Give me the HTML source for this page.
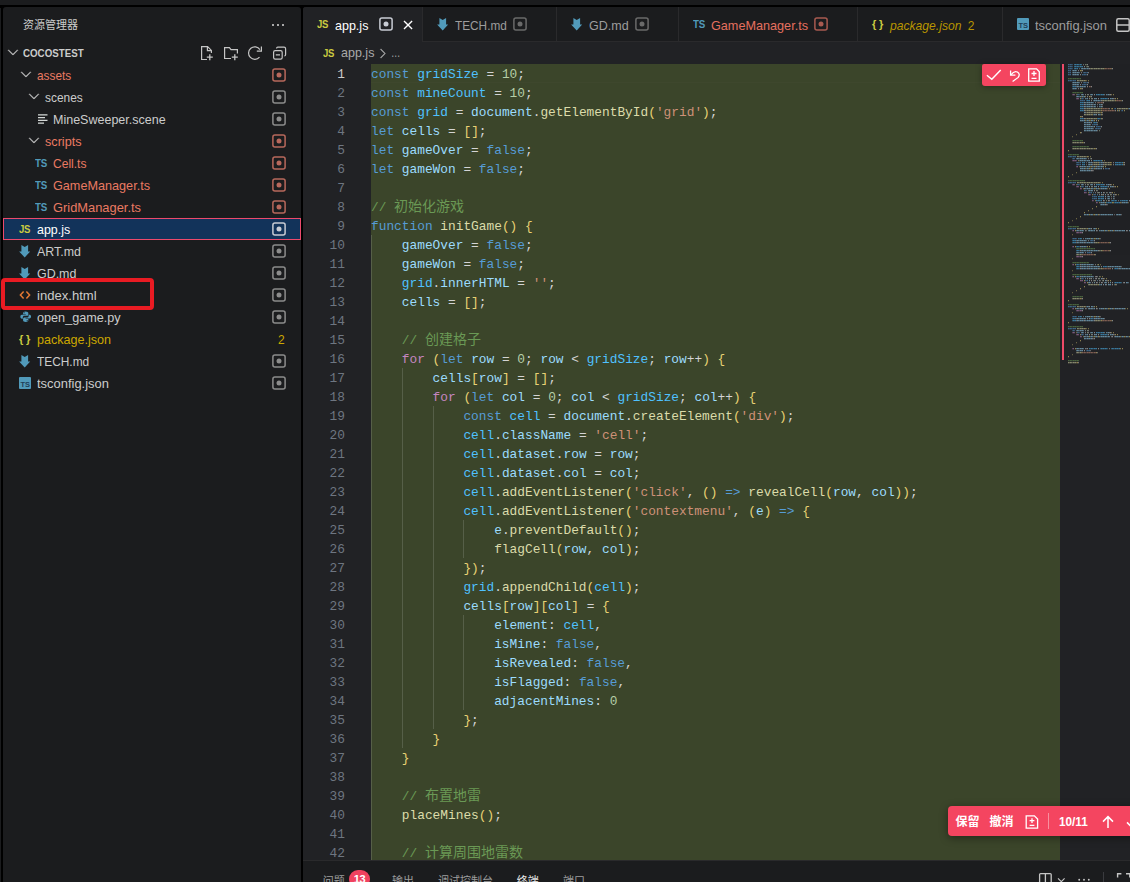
<!DOCTYPE html>
<html lang="zh-CN">
<head>
<meta charset="utf-8">
<title>app.js - COCOSTEST</title>
<style>
*{box-sizing:border-box;margin:0;padding:0}
html,body{width:1130px;height:882px;overflow:hidden;background:#000}
body{position:relative;font-family:"Liberation Sans","Noto Sans CJK SC",sans-serif;font-size:13px;color:#cccccc;-webkit-font-smoothing:antialiased}
.abs{position:absolute}
#topstrip{left:0;top:0;width:1130px;height:5px;background:#1b1c1e}
#leftstrip{left:0;top:8px;width:1px;height:874px;background:#1b1c1e}
#side{left:3px;top:7px;width:298px;height:875px;background:#1b1c1e;border-radius:3px 3px 0 0;overflow:hidden}
#main{left:303px;top:7px;width:840px;height:875px;background:#212225;border-radius:3px 0 0 0;overflow:hidden}
/* sidebar */
.shead{left:20px;top:1px;height:35px;line-height:35px;font-size:11px;color:#cccccc}
.row{position:absolute;left:0;width:298px;height:22px;line-height:22px;white-space:nowrap}
.row .lbl{position:absolute;top:1px;font-size:13px}
.row .ic{position:absolute;top:0;height:22px}
.sal{color:#ea7a62}
.yel{color:#cca700}
.st{position:absolute;left:269px;top:4px;width:14px;height:14px}
.sel{background:#12335a;outline:1px solid #ec4a6c;outline-offset:-1px;color:#fff}
.row .lbl.root{font-weight:bold;color:#cccccc;top:0}
.jsonic{font-weight:bold;font-size:11px;color:#cbcb41;letter-spacing:2.8px}
.sal2{color:#e5705f}.yel2{color:#b89500}
.tsic{font-weight:bold;font-size:11.5px;color:#519aba;letter-spacing:-0.3px;transform:scaleX(.85);transform-origin:0 50%}
.jsic{font-weight:bold;font-size:11.5px;color:#cbcb41;letter-spacing:-0.3px;transform:scaleX(.83);transform-origin:0 50%}
#redbox{left:0.5px;top:278.3px;width:153px;height:31.6px;border:4px solid #e91b23;border-radius:4px}
/* tabs */
#tabs{left:0;top:0;width:840px;height:35px;background:#1b1c1e;border-bottom:1px solid #2a2a2c}
.tab{position:absolute;top:0;height:34px;line-height:34px;border-right:1px solid #2a2a2c;color:#9d9d9d;white-space:nowrap}
.tab.act{background:#212225;color:#fff;height:35px}
.tab .lbl{position:absolute;top:2px}
.tab svg,.tab .ic{position:absolute}
#crumb{left:0;top:35px;width:840px;height:22px;line-height:22px;color:#a9a9a9}
/* editor */
#ed{left:0;top:57px;width:840px;height:797px;overflow:hidden}
#nums{position:absolute;left:0;top:1px;width:42px;text-align:right;color:#6e7681}
.ln{height:19px;line-height:19px}
.ln.cur{color:#cccccc}
#nums,#code{font-family:"Liberation Mono","Noto Sans CJK SC",monospace;font-size:12.83px}
#green{left:68px;top:0;width:689px;height:797px;background:#3b452a}
#code{position:absolute;left:68px;top:1px;white-space:pre;color:#d4d4d4}
.cl{height:19px;line-height:19px}
.cj{font-size:14px}
.kw{color:#569cd6}.ctrl{color:#c586c0}.const{color:#4fc1ff}.var{color:#9cdcfe}.fn{color:#dcdcaa}.str{color:#ce9178}.num{color:#b5cea8}.com{color:#6a9955}.pun{color:#d4d4d4}
.b0,.b1,.b2{color:#e8d274}
.g{position:absolute;width:1px;height:19px;background:rgba(255,255,255,0.14)}
#redbar{left:759px;top:57px;width:2px;height:296px;background:#ee4a68}
.mm{position:absolute;left:765px;top:57px;opacity:.55}
#curline{left:68px;top:0;width:689px;height:19px;border-bottom:1px solid rgba(255,255,255,.015)}
.pill{background:#f44560;color:#fff;border-radius:4px}
#pill1{left:679px;top:57px;width:64px;height:22px;border-radius:2px 2px 3px 3px;box-shadow:0 1px 6px rgba(0,0,0,.35)}
#pill2{left:645px;top:799px;width:220px;height:30px;box-shadow:0 2px 8px rgba(0,0,0,.4);font-size:12px;line-height:30px;font-weight:bold}
/* panel */
#panel{left:0;top:853px;width:840px;height:30px;background:#1b1c1e;border-top:1px solid #2a2a2c}
#panel .pt{position:absolute;top:8.5px;font-size:11px;line-height:22px;color:#9d9d9d}
</style>
</head>
<body>
<div id="topstrip" class="abs"></div>
<div id="leftstrip" class="abs"></div>

<div id="side" class="abs">
  <div class="abs shead">资源管理器</div>
  <svg class="abs" style="left:267px;top:10px" width="16" height="16" viewBox="0 0 16 16"><circle cx="3" cy="8" r="1.1" fill="#ccc"/><circle cx="8" cy="8" r="1.1" fill="#ccc"/><circle cx="13" cy="8" r="1.1" fill="#ccc"/></svg>
  <div id="tree"><div class="row " style="top:35px"><svg class="abs" style="left:2.4px;top:2.2px" width="16" height="16" viewBox="0 0 16 16"><path fill="#c5c5c5" stroke="#c5c5c5" stroke-width="0.3" d="M7.976 10.072l4.357-4.357.62.618L8.284 11h-.618L3 6.333l.619-.618 4.357 4.357z"/></svg><span class="lbl root" style="left:20px;font-size:11px;transform:scaleX(0.8853);transform-origin:0 50%;">COCOSTEST</span><svg class="abs" style="left:196px;top:2px" width="90" height="18" viewBox="0 0 90 18" fill="none" stroke="#c5c5c5" stroke-width="1.2"><path d="M8 15.5H2.6V2.6H8.6L12.4 6.4V9"/><path d="M8.4 2.8V6.6H12.2"/><path d="M10.8 10.2V16.2 M7.8 13.2H13.8" stroke-width="1.3"/><path d="M32 14.5H25.6V3.6H30.4L32 5.6H38.4V9.4"/><path d="M35.8 10.2V16.2 M32.8 13.2H38.8" stroke-width="1.3"/><path d="M60.9 5.6A6.2 6.2 0 1 0 60.5 13.1"/><path d="M62.4 2.6V7.2H57.8"/><rect x="74.6" y="6.6" width="8.6" height="8.6" rx="1.6"/><path d="M77.6 4.2V4.4Q77.6 3.2 78.8 3.2H85Q86.6 3.2 86.6 4.8V10.6Q86.6 12 85.4 12"/><path d="M76.8 10.9H81"/></svg></div><div class="row " style="top:57px"><svg class="abs" style="left:15px;top:2.2px" width="16" height="16" viewBox="0 0 16 16"><path fill="#c5c5c5" stroke="#c5c5c5" stroke-width="0.3" d="M7.976 10.072l4.357-4.357.62.618L8.284 11h-.618L3 6.333l.619-.618 4.357 4.357z"/></svg><span class="lbl sal" style="left:34.2px;font-size:13px;transform:scaleX(0.9101);transform-origin:0 50%;">assets</span><svg class="abs" style="left:269px;top:4px" width="14" height="14" viewBox="0 0 14 14"><rect x="0.9" y="0.9" width="12.2" height="12.2" rx="2" fill="none" stroke="#b8685c" stroke-width="1.5"/><circle cx="7" cy="7" r="2.5" fill="#b8685c"/></svg></div><div class="row " style="top:79px"><svg class="abs" style="left:23.2px;top:2.2px" width="16" height="16" viewBox="0 0 16 16"><path fill="#c5c5c5" stroke="#c5c5c5" stroke-width="0.3" d="M7.976 10.072l4.357-4.357.62.618L8.284 11h-.618L3 6.333l.619-.618 4.357 4.357z"/></svg><span class="lbl " style="left:42.2px;font-size:13px;transform:scaleX(0.9150);transform-origin:0 50%;">scenes</span><svg class="abs" style="left:269px;top:4px" width="14" height="14" viewBox="0 0 14 14"><rect x="0.9" y="0.9" width="12.2" height="12.2" rx="2" fill="none" stroke="#8c8c8c" stroke-width="1.5"/><circle cx="7" cy="7" r="2.5" fill="#8c8c8c"/></svg></div><div class="row " style="top:101px"><svg class="abs" style="left:34.2px;top:5px" width="12" height="12" viewBox="0 0 12 12"><path stroke="#d4d7d6" stroke-width="1.3" d="M1 1.8H10.5 M1 4.6H8 M1 7.4H10.5 M1 10.2H7"/></svg><span class="lbl " style="left:50.3px;font-size:13px;transform:scaleX(0.9618);transform-origin:0 50%;">MineSweeper.scene</span><svg class="abs" style="left:269px;top:4px" width="14" height="14" viewBox="0 0 14 14"><rect x="0.9" y="0.9" width="12.2" height="12.2" rx="2" fill="none" stroke="#8c8c8c" stroke-width="1.5"/><circle cx="7" cy="7" r="2.5" fill="#8c8c8c"/></svg></div><div class="row " style="top:123px"><svg class="abs" style="left:23.2px;top:2.2px" width="16" height="16" viewBox="0 0 16 16"><path fill="#c5c5c5" stroke="#c5c5c5" stroke-width="0.3" d="M7.976 10.072l4.357-4.357.62.618L8.284 11h-.618L3 6.333l.619-.618 4.357 4.357z"/></svg><span class="lbl sal" style="left:42.2px;font-size:13px;transform:scaleX(0.9717);transform-origin:0 50%;">scripts</span><svg class="abs" style="left:269px;top:4px" width="14" height="14" viewBox="0 0 14 14"><rect x="0.9" y="0.9" width="12.2" height="12.2" rx="2" fill="none" stroke="#b8685c" stroke-width="1.5"/><circle cx="7" cy="7" r="2.5" fill="#b8685c"/></svg></div><div class="row " style="top:145px"><span class="abs tsic" style="left:32px;top:0px">TS</span><span class="lbl sal" style="left:50.3px;font-size:13px;transform:scaleX(0.9273);transform-origin:0 50%;">Cell.ts</span><svg class="abs" style="left:269px;top:4px" width="14" height="14" viewBox="0 0 14 14"><rect x="0.9" y="0.9" width="12.2" height="12.2" rx="2" fill="none" stroke="#b8685c" stroke-width="1.5"/><circle cx="7" cy="7" r="2.5" fill="#b8685c"/></svg></div><div class="row " style="top:167px"><span class="abs tsic" style="left:32px;top:0px">TS</span><span class="lbl sal" style="left:50.3px;font-size:13px;transform:scaleX(0.9727);transform-origin:0 50%;">GameManager.ts</span><svg class="abs" style="left:269px;top:4px" width="14" height="14" viewBox="0 0 14 14"><rect x="0.9" y="0.9" width="12.2" height="12.2" rx="2" fill="none" stroke="#b8685c" stroke-width="1.5"/><circle cx="7" cy="7" r="2.5" fill="#b8685c"/></svg></div><div class="row " style="top:189px"><span class="abs tsic" style="left:32px;top:0px">TS</span><span class="lbl sal" style="left:50.3px;font-size:13px;transform:scaleX(0.9902);transform-origin:0 50%;">GridManager.ts</span><svg class="abs" style="left:269px;top:4px" width="14" height="14" viewBox="0 0 14 14"><rect x="0.9" y="0.9" width="12.2" height="12.2" rx="2" fill="none" stroke="#b8685c" stroke-width="1.5"/><circle cx="7" cy="7" r="2.5" fill="#b8685c"/></svg></div><div class="row sel" style="top:211px"><span class="abs jsic" style="left:16px;top:0px">JS</span><span class="lbl " style="left:34.2px;font-size:13px;transform:scaleX(0.9567);transform-origin:0 50%;">app.js</span><svg class="abs" style="left:269px;top:4px" width="14" height="14" viewBox="0 0 14 14"><rect x="0.9" y="0.9" width="12.2" height="12.2" rx="2" fill="none" stroke="#c8ccd4" stroke-width="1.5"/><circle cx="7" cy="7" r="2.5" fill="#c8ccd4"/></svg></div><div class="row " style="top:233px"><svg class="abs" style="left:16px;top:5px" width="12" height="13" viewBox="0 0 12 13"><path fill="#519aba" d="M2.4 0 L5.7 2 L9.1 0 L9.1 6.4 L11.2 6.4 L5.7 12.4 L0.1 6.4 L2.4 6.4 Z"/></svg><span class="lbl " style="left:34.2px;font-size:13px;transform:scaleX(0.9543);transform-origin:0 50%;">ART.md</span><svg class="abs" style="left:269px;top:4px" width="14" height="14" viewBox="0 0 14 14"><rect x="0.9" y="0.9" width="12.2" height="12.2" rx="2" fill="none" stroke="#8c8c8c" stroke-width="1.5"/><circle cx="7" cy="7" r="2.5" fill="#8c8c8c"/></svg></div><div class="row " style="top:255px"><svg class="abs" style="left:16px;top:5px" width="12" height="13" viewBox="0 0 12 13"><path fill="#519aba" d="M2.4 0 L5.7 2 L9.1 0 L9.1 6.4 L11.2 6.4 L5.7 12.4 L0.1 6.4 L2.4 6.4 Z"/></svg><span class="lbl " style="left:34.2px;font-size:13px;transform:scaleX(0.9570);transform-origin:0 50%;">GD.md</span><svg class="abs" style="left:269px;top:4px" width="14" height="14" viewBox="0 0 14 14"><rect x="0.9" y="0.9" width="12.2" height="12.2" rx="2" fill="none" stroke="#8c8c8c" stroke-width="1.5"/><circle cx="7" cy="7" r="2.5" fill="#8c8c8c"/></svg></div><div class="row " style="top:277px"><svg class="abs" style="left:16px;top:5px" width="12" height="12" viewBox="0 0 12 12"><path fill="none" stroke="#e37933" stroke-width="1.5" d="M4.6 2.6 L1.4 6 L4.6 9.4 M7.4 2.6 L10.6 6 L7.4 9.4"/></svg><span class="lbl " style="left:34.2px;font-size:13px;transform:scaleX(1.0059);transform-origin:0 50%;">index.html</span><svg class="abs" style="left:269px;top:4px" width="14" height="14" viewBox="0 0 14 14"><rect x="0.9" y="0.9" width="12.2" height="12.2" rx="2" fill="none" stroke="#8c8c8c" stroke-width="1.5"/><circle cx="7" cy="7" r="2.5" fill="#8c8c8c"/></svg></div><div class="row " style="top:299px"><svg class="abs" style="left:16.5px;top:5.2px" width="11.4" height="11.4" viewBox="0 0 13 13"><path fill="#519aba" d="M6.3 0.5c-2 0-2.8 0.8-2.8 2v1.3h3.1v0.6H2.2C1 4.4 0.4 5.4 0.4 6.6s0.6 2.2 1.8 2.2h1V7.4c0-1.1 0.9-1.9 2-1.9h2.7c0.9 0 1.6-0.7 1.6-1.6V2.5c0-1.2-1-2-3.2-2zM4.8 1.4a0.6 0.6 0 1 1 0 1.2 0.6 0.6 0 0 1 0-1.2z"/><path fill="#519aba" d="M6.7 12.5c2 0 2.8-0.8 2.8-2V9.2H6.4V8.6h4.4c1.2 0 1.8-1 1.8-2.2s-0.6-2.2-1.8-2.2h-1v1.4c0 1.1-0.9 1.9-2 1.9H5.1c-0.9 0-1.6 0.7-1.6 1.6v1.4c0 1.2 1 2 3.2 2zM8.2 11.6a0.6 0.6 0 1 1 0-1.2 0.6 0.6 0 0 1 0 1.2z"/></svg><span class="lbl " style="left:34.2px;font-size:13px;transform:scaleX(0.9731);transform-origin:0 50%;">open_game.py</span><svg class="abs" style="left:269px;top:4px" width="14" height="14" viewBox="0 0 14 14"><rect x="0.9" y="0.9" width="12.2" height="12.2" rx="2" fill="none" stroke="#8c8c8c" stroke-width="1.5"/><circle cx="7" cy="7" r="2.5" fill="#8c8c8c"/></svg></div><div class="row " style="top:321px"><span class="abs jsonic" style="left:16px;top:0px">{}</span><span class="lbl yel" style="left:34.2px;font-size:13px;transform:scaleX(0.9670);transform-origin:0 50%;">package.json</span><span class="lbl yel" style="left:275px;font-size:12px">2</span></div><div class="row " style="top:343px"><svg class="abs" style="left:16px;top:5px" width="12" height="13" viewBox="0 0 12 13"><path fill="#519aba" d="M2.4 0 L5.7 2 L9.1 0 L9.1 6.4 L11.2 6.4 L5.7 12.4 L0.1 6.4 L2.4 6.4 Z"/></svg><span class="lbl " style="left:34.2px;font-size:13px;transform:scaleX(0.9148);transform-origin:0 50%;">TECH.md</span><svg class="abs" style="left:269px;top:4px" width="14" height="14" viewBox="0 0 14 14"><rect x="0.9" y="0.9" width="12.2" height="12.2" rx="2" fill="none" stroke="#8c8c8c" stroke-width="1.5"/><circle cx="7" cy="7" r="2.5" fill="#8c8c8c"/></svg></div><div class="row " style="top:365px"><svg class="abs" style="left:16px;top:5px" width="12" height="12" viewBox="0 0 12 12"><rect x="0" y="0" width="12" height="12" rx="1" fill="#519aba"/><text x="6.2" y="10" font-family="Liberation Sans, sans-serif" font-size="7.5" font-weight="bold" fill="#1f3f58" text-anchor="middle">TS</text></svg><span class="lbl " style="left:34.2px;font-size:13px;transform:scaleX(0.9949);transform-origin:0 50%;">tsconfig.json</span><svg class="abs" style="left:269px;top:4px" width="14" height="14" viewBox="0 0 14 14"><rect x="0.9" y="0.9" width="12.2" height="12.2" rx="2" fill="none" stroke="#8c8c8c" stroke-width="1.5"/><circle cx="7" cy="7" r="2.5" fill="#8c8c8c"/></svg></div></div>
</div>
<div id="redbox" class="abs"></div>

<div id="main" class="abs">
  <div id="tabs" class="abs"><div class="tab act" style="left:0px;width:120px"><span class="abs jsic" style="left:14px;top:0px">JS</span><span class="lbl " style="left:31.8px;font-size:13px;transform:scaleX(0.9624);transform-origin:0 50%;">app.js</span><svg class="abs" style="left:76px;top:10px" width="14" height="14" viewBox="0 0 14 14"><rect x="0.9" y="0.9" width="12.2" height="12.2" rx="2" fill="none" stroke="#c8ccd4" stroke-width="1.5"/><circle cx="7" cy="7" r="2.5" fill="#c8ccd4"/></svg><svg class="abs" style="left:97px;top:10px" width="16" height="16" viewBox="0 0 16 16"><path stroke="#fff" stroke-width="1.4" d="M4 4.1L12.1 11.9M12.1 4.1L4 11.9"/></svg></div><div class="tab " style="left:120px;width:134px"><svg class="abs" style="left:14px;top:10.8px" width="12" height="13" viewBox="0 0 12 13"><path fill="#519aba" d="M2.4 0 L5.7 2 L9.1 0 L9.1 6.4 L11.2 6.4 L5.7 12.4 L0.1 6.4 L2.4 6.4 Z"/></svg><span class="lbl " style="left:32px;font-size:13px;transform:scaleX(0.9078);transform-origin:0 50%;">TECH.md</span><svg class="abs" style="left:90px;top:10px" width="14" height="14" viewBox="0 0 14 14"><rect x="0.9" y="0.9" width="12.2" height="12.2" rx="2" fill="none" stroke="#6a6a6a" stroke-width="1.5"/><circle cx="7" cy="7" r="2.5" fill="#6a6a6a"/></svg></div><div class="tab " style="left:254px;width:122px"><svg class="abs" style="left:14.3px;top:10.8px" width="12" height="13" viewBox="0 0 12 13"><path fill="#519aba" d="M2.4 0 L5.7 2 L9.1 0 L9.1 6.4 L11.2 6.4 L5.7 12.4 L0.1 6.4 L2.4 6.4 Z"/></svg><span class="lbl " style="left:32px;font-size:13px;transform:scaleX(0.9618);transform-origin:0 50%;">GD.md</span><svg class="abs" style="left:78.2px;top:10px" width="14" height="14" viewBox="0 0 14 14"><rect x="0.9" y="0.9" width="12.2" height="12.2" rx="2" fill="none" stroke="#6a6a6a" stroke-width="1.5"/><circle cx="7" cy="7" r="2.5" fill="#6a6a6a"/></svg></div><div class="tab " style="left:376px;width:179px"><span class="abs tsic" style="left:13.6px;top:0px">TS</span><span class="lbl sal2" style="left:32.3px;font-size:13px;transform:scaleX(0.9727);transform-origin:0 50%;">GameManager.ts</span><svg class="abs" style="left:135.4px;top:10px" width="14" height="14" viewBox="0 0 14 14"><rect x="0.9" y="0.9" width="12.2" height="12.2" rx="2" fill="none" stroke="#a85a50" stroke-width="1.5"/><circle cx="7" cy="7" r="2.5" fill="#a85a50"/></svg></div><div class="tab " style="left:555px;width:145px"><span class="abs jsonic" style="left:14px;top:0px">{}</span><span class="lbl yel2" style="left:32.4px;font-size:13px;font-style:italic;transform:scaleX(0.9331);transform-origin:0 50%;">package.json</span><span class="lbl yel2" style="left:109.8px;font-size:12px">2</span></div><div class="tab " style="left:700px;width:160px"><svg class="abs" style="left:14.2px;top:11px" width="12" height="12" viewBox="0 0 12 12"><rect x="0" y="0" width="12" height="12" rx="1" fill="#519aba"/><text x="6.2" y="10" font-family="Liberation Sans, sans-serif" font-size="7.5" font-weight="bold" fill="#1f3f58" text-anchor="middle">TS</text></svg><span class="lbl " style="left:32.4px;font-size:13px;transform:scaleX(0.9949);transform-origin:0 50%;">tsconfig.json</span></div><svg class="abs" style="left:812.8px;top:11px" width="14" height="14" viewBox="0 0 14 14"><rect x="0.8" y="0.8" width="12.4" height="12.4" rx="1.5" fill="#1b1c1e" stroke="#c5c5c5" stroke-width="1.5"/><path d="M0.8 7H13.2" stroke="#c5c5c5" stroke-width="1.5"/></svg></div>
  <div id="crumb" class="abs"><span class="abs jsic" style="left:20px;top:0px">JS</span><span class="lbl abs" style="left:37.9px;font-size:13px;top:0;position:absolute;transform:scaleX(0.9624);transform-origin:0 50%;">app.js</span><svg class="abs" style="left:71.5px;top:3.5px" width="15" height="15" viewBox="0 0 16 16"><path fill="#a9a9a9" stroke="#a9a9a9" stroke-width="0.4" d="M10.072 8.024L5.715 3.667l.618-.62L11 7.716v.618L6.333 13l-.618-.619 4.357-4.357z"/></svg><span class="abs" style="left:87.6px;top:0;transform:scaleX(.72);transform-origin:0 50%">…</span></div>
  <div id="ed" class="abs">
    <div id="green" class="abs"></div>
    <div id="curline" class="abs"></div>
    <div id="nums"><div class="ln cur">1</div><div class="ln">2</div><div class="ln">3</div><div class="ln">4</div><div class="ln">5</div><div class="ln">6</div><div class="ln">7</div><div class="ln">8</div><div class="ln">9</div><div class="ln">10</div><div class="ln">11</div><div class="ln">12</div><div class="ln">13</div><div class="ln">14</div><div class="ln">15</div><div class="ln">16</div><div class="ln">17</div><div class="ln">18</div><div class="ln">19</div><div class="ln">20</div><div class="ln">21</div><div class="ln">22</div><div class="ln">23</div><div class="ln">24</div><div class="ln">25</div><div class="ln">26</div><div class="ln">27</div><div class="ln">28</div><div class="ln">29</div><div class="ln">30</div><div class="ln">31</div><div class="ln">32</div><div class="ln">33</div><div class="ln">34</div><div class="ln">35</div><div class="ln">36</div><div class="ln">37</div><div class="ln">38</div><div class="ln">39</div><div class="ln">40</div><div class="ln">41</div><div class="ln">42</div></div>
    <div id="code"><i class="g" style="left:0.0px;top:170px"></i><i class="g" style="left:0.0px;top:189px"></i><i class="g" style="left:0.0px;top:208px"></i><i class="g" style="left:0.0px;top:227px"></i><i class="g" style="left:0.0px;top:246px"></i><i class="g" style="left:0.0px;top:265px"></i><i class="g" style="left:0.0px;top:284px"></i><i class="g" style="left:0.0px;top:303px"></i><i class="g" style="left:30.8px;top:303px"></i><i class="g" style="left:0.0px;top:322px"></i><i class="g" style="left:30.8px;top:322px"></i><i class="g" style="left:0.0px;top:341px"></i><i class="g" style="left:30.8px;top:341px"></i><i class="g" style="left:61.6px;top:341px"></i><i class="g" style="left:0.0px;top:360px"></i><i class="g" style="left:30.8px;top:360px"></i><i class="g" style="left:61.6px;top:360px"></i><i class="g" style="left:0.0px;top:379px"></i><i class="g" style="left:30.8px;top:379px"></i><i class="g" style="left:61.6px;top:379px"></i><i class="g" style="left:0.0px;top:398px"></i><i class="g" style="left:30.8px;top:398px"></i><i class="g" style="left:61.6px;top:398px"></i><i class="g" style="left:0.0px;top:417px"></i><i class="g" style="left:30.8px;top:417px"></i><i class="g" style="left:61.6px;top:417px"></i><i class="g" style="left:0.0px;top:436px"></i><i class="g" style="left:30.8px;top:436px"></i><i class="g" style="left:61.6px;top:436px"></i><i class="g" style="left:0.0px;top:455px"></i><i class="g" style="left:30.8px;top:455px"></i><i class="g" style="left:61.6px;top:455px"></i><i class="g" style="left:92.4px;top:455px"></i><i class="g" style="left:0.0px;top:474px"></i><i class="g" style="left:30.8px;top:474px"></i><i class="g" style="left:61.6px;top:474px"></i><i class="g" style="left:92.4px;top:474px"></i><i class="g" style="left:0.0px;top:493px"></i><i class="g" style="left:30.8px;top:493px"></i><i class="g" style="left:61.6px;top:493px"></i><i class="g" style="left:0.0px;top:512px"></i><i class="g" style="left:30.8px;top:512px"></i><i class="g" style="left:61.6px;top:512px"></i><i class="g" style="left:0.0px;top:531px"></i><i class="g" style="left:30.8px;top:531px"></i><i class="g" style="left:61.6px;top:531px"></i><i class="g" style="left:0.0px;top:550px"></i><i class="g" style="left:30.8px;top:550px"></i><i class="g" style="left:61.6px;top:550px"></i><i class="g" style="left:92.4px;top:550px"></i><i class="g" style="left:0.0px;top:569px"></i><i class="g" style="left:30.8px;top:569px"></i><i class="g" style="left:61.6px;top:569px"></i><i class="g" style="left:92.4px;top:569px"></i><i class="g" style="left:0.0px;top:588px"></i><i class="g" style="left:30.8px;top:588px"></i><i class="g" style="left:61.6px;top:588px"></i><i class="g" style="left:92.4px;top:588px"></i><i class="g" style="left:0.0px;top:607px"></i><i class="g" style="left:30.8px;top:607px"></i><i class="g" style="left:61.6px;top:607px"></i><i class="g" style="left:92.4px;top:607px"></i><i class="g" style="left:0.0px;top:626px"></i><i class="g" style="left:30.8px;top:626px"></i><i class="g" style="left:61.6px;top:626px"></i><i class="g" style="left:92.4px;top:626px"></i><i class="g" style="left:0.0px;top:645px"></i><i class="g" style="left:30.8px;top:645px"></i><i class="g" style="left:61.6px;top:645px"></i><i class="g" style="left:0.0px;top:664px"></i><i class="g" style="left:30.8px;top:664px"></i><i class="g" style="left:0.0px;top:683px"></i><i class="g" style="left:0.0px;top:702px"></i><i class="g" style="left:0.0px;top:721px"></i><i class="g" style="left:0.0px;top:740px"></i><i class="g" style="left:0.0px;top:759px"></i><i class="g" style="left:0.0px;top:778px"></i><div class="cl"><span class="kw">const</span> <span class="const">gridSize</span> <span class="pun">=</span> <span class="num">10</span><span class="pun">;</span></div><div class="cl"><span class="kw">const</span> <span class="const">mineCount</span> <span class="pun">=</span> <span class="num">10</span><span class="pun">;</span></div><div class="cl"><span class="kw">const</span> <span class="const">grid</span> <span class="pun">=</span> <span class="var">document</span><span class="pun">.</span><span class="fn">getElementById</span><span class="b0">(</span><span class="str">&#x27;grid&#x27;</span><span class="b0">)</span><span class="pun">;</span></div><div class="cl"><span class="kw">let</span> <span class="var">cells</span> <span class="pun">=</span> <span class="b0">[</span><span class="b0">]</span><span class="pun">;</span></div><div class="cl"><span class="kw">let</span> <span class="var">gameOver</span> <span class="pun">=</span> <span class="kw">false</span><span class="pun">;</span></div><div class="cl"><span class="kw">let</span> <span class="var">gameWon</span> <span class="pun">=</span> <span class="kw">false</span><span class="pun">;</span></div><div class="cl"></div><div class="cl"><span class="com">// <span class="cj">初始化游戏</span></span></div><div class="cl"><span class="kw">function</span> <span class="fn">initGame</span><span class="b0">(</span><span class="b0">)</span> <span class="b0">{</span></div><div class="cl">    <span class="var">gameOver</span> <span class="pun">=</span> <span class="kw">false</span><span class="pun">;</span></div><div class="cl">    <span class="var">gameWon</span> <span class="pun">=</span> <span class="kw">false</span><span class="pun">;</span></div><div class="cl">    <span class="const">grid</span><span class="pun">.</span><span class="var">innerHTML</span> <span class="pun">=</span> <span class="str">&#x27;&#x27;</span><span class="pun">;</span></div><div class="cl">    <span class="var">cells</span> <span class="pun">=</span> <span class="b1">[</span><span class="b1">]</span><span class="pun">;</span></div><div class="cl"></div><div class="cl">    <span class="com">// <span class="cj">创建格子</span></span></div><div class="cl">    <span class="ctrl">for</span> <span class="b1">(</span><span class="kw">let</span> <span class="var">row</span> <span class="pun">=</span> <span class="num">0</span><span class="pun">;</span> <span class="var">row</span> <span class="pun">&lt;</span> <span class="const">gridSize</span><span class="pun">;</span> <span class="var">row</span><span class="pun">+</span><span class="pun">+</span><span class="b1">)</span> <span class="b1">{</span></div><div class="cl">        <span class="var">cells</span><span class="b2">[</span><span class="var">row</span><span class="b2">]</span> <span class="pun">=</span> <span class="b2">[</span><span class="b2">]</span><span class="pun">;</span></div><div class="cl">        <span class="ctrl">for</span> <span class="b2">(</span><span class="kw">let</span> <span class="var">col</span> <span class="pun">=</span> <span class="num">0</span><span class="pun">;</span> <span class="var">col</span> <span class="pun">&lt;</span> <span class="const">gridSize</span><span class="pun">;</span> <span class="var">col</span><span class="pun">+</span><span class="pun">+</span><span class="b2">)</span> <span class="b2">{</span></div><div class="cl">            <span class="kw">const</span> <span class="const">cell</span> <span class="pun">=</span> <span class="var">document</span><span class="pun">.</span><span class="fn">createElement</span><span class="b0">(</span><span class="str">&#x27;div&#x27;</span><span class="b0">)</span><span class="pun">;</span></div><div class="cl">            <span class="const">cell</span><span class="pun">.</span><span class="var">className</span> <span class="pun">=</span> <span class="str">&#x27;cell&#x27;</span><span class="pun">;</span></div><div class="cl">            <span class="const">cell</span><span class="pun">.</span><span class="var">dataset</span><span class="pun">.</span><span class="var">row</span> <span class="pun">=</span> <span class="var">row</span><span class="pun">;</span></div><div class="cl">            <span class="const">cell</span><span class="pun">.</span><span class="var">dataset</span><span class="pun">.</span><span class="var">col</span> <span class="pun">=</span> <span class="var">col</span><span class="pun">;</span></div><div class="cl">            <span class="const">cell</span><span class="pun">.</span><span class="fn">addEventListener</span><span class="b0">(</span><span class="str">&#x27;click&#x27;</span><span class="pun">,</span> <span class="b1">(</span><span class="b1">)</span> <span class="kw">=&gt;</span> <span class="fn">revealCell</span><span class="b1">(</span><span class="var">row</span><span class="pun">,</span> <span class="var">col</span><span class="b1">)</span><span class="b0">)</span><span class="pun">;</span></div><div class="cl">            <span class="const">cell</span><span class="pun">.</span><span class="fn">addEventListener</span><span class="b0">(</span><span class="str">&#x27;contextmenu&#x27;</span><span class="pun">,</span> <span class="b1">(</span><span class="var">e</span><span class="b1">)</span> <span class="kw">=&gt;</span> <span class="b1">{</span></div><div class="cl">                <span class="var">e</span><span class="pun">.</span><span class="fn">preventDefault</span><span class="b2">(</span><span class="b2">)</span><span class="pun">;</span></div><div class="cl">                <span class="fn">flagCell</span><span class="b2">(</span><span class="var">row</span><span class="pun">,</span> <span class="var">col</span><span class="b2">)</span><span class="pun">;</span></div><div class="cl">            <span class="b1">}</span><span class="b0">)</span><span class="pun">;</span></div><div class="cl">            <span class="const">grid</span><span class="pun">.</span><span class="fn">appendChild</span><span class="b0">(</span><span class="const">cell</span><span class="b0">)</span><span class="pun">;</span></div><div class="cl">            <span class="var">cells</span><span class="b0">[</span><span class="var">row</span><span class="b0">]</span><span class="b0">[</span><span class="var">col</span><span class="b0">]</span> <span class="pun">=</span> <span class="b0">{</span></div><div class="cl">                <span class="var">element</span><span class="pun">:</span> <span class="const">cell</span><span class="pun">,</span></div><div class="cl">                <span class="var">isMine</span><span class="pun">:</span> <span class="kw">false</span><span class="pun">,</span></div><div class="cl">                <span class="var">isRevealed</span><span class="pun">:</span> <span class="kw">false</span><span class="pun">,</span></div><div class="cl">                <span class="var">isFlagged</span><span class="pun">:</span> <span class="kw">false</span><span class="pun">,</span></div><div class="cl">                <span class="var">adjacentMines</span><span class="pun">:</span> <span class="num">0</span></div><div class="cl">            <span class="b0">}</span><span class="pun">;</span></div><div class="cl">        <span class="b2">}</span></div><div class="cl">    <span class="b1">}</span></div><div class="cl"></div><div class="cl">    <span class="com">// <span class="cj">布置地雷</span></span></div><div class="cl">    <span class="fn">placeMines</span><span class="b1">(</span><span class="b1">)</span><span class="pun">;</span></div><div class="cl"></div><div class="cl">    <span class="com">// <span class="cj">计算周围地雷数</span></span></div></div>
  </div>
  <div id="redbar" class="abs"></div>
  <svg class="mm" width="68" height="302" viewBox="0 0 68 302"><defs><pattern id="dz" width="7" height="2" patternUnits="userSpaceOnUse"><rect x="1" width="1" height="2" fill="#212225" opacity=".3"/><rect x="3" width="1" height="2" fill="#212225" opacity=".15"/><rect x="4" width="1" height="2" fill="#212225" opacity=".4"/><rect x="6" width="1" height="2" fill="#212225" opacity=".2"/></pattern></defs><rect x="0" y="0" width="5" height="1.3" fill="#569cd6"/><rect x="6" y="0" width="8" height="1.3" fill="#4fc1ff"/><rect x="15" y="0" width="1" height="1.3" fill="#d4d4d4"/><rect x="17" y="0" width="2" height="1.3" fill="#b5cea8"/><rect x="19" y="0" width="1" height="1.3" fill="#d4d4d4"/><rect x="0" y="2" width="5" height="1.3" fill="#569cd6"/><rect x="6" y="2" width="9" height="1.3" fill="#4fc1ff"/><rect x="16" y="2" width="1" height="1.3" fill="#d4d4d4"/><rect x="18" y="2" width="2" height="1.3" fill="#b5cea8"/><rect x="20" y="2" width="1" height="1.3" fill="#d4d4d4"/><rect x="0" y="4" width="5" height="1.3" fill="#569cd6"/><rect x="6" y="4" width="4" height="1.3" fill="#4fc1ff"/><rect x="11" y="4" width="1" height="1.3" fill="#d4d4d4"/><rect x="13" y="4" width="8" height="1.3" fill="#9cdcfe"/><rect x="21" y="4" width="1" height="1.3" fill="#d4d4d4"/><rect x="22" y="4" width="14" height="1.3" fill="#dcdcaa"/><rect x="36" y="4" width="1" height="1.3" fill="#e8d274"/><rect x="37" y="4" width="6" height="1.3" fill="#ce9178"/><rect x="43" y="4" width="1" height="1.3" fill="#e8d274"/><rect x="44" y="4" width="1" height="1.3" fill="#d4d4d4"/><rect x="0" y="6" width="3" height="1.3" fill="#569cd6"/><rect x="4" y="6" width="5" height="1.3" fill="#9cdcfe"/><rect x="10" y="6" width="1" height="1.3" fill="#d4d4d4"/><rect x="12" y="6" width="1" height="1.3" fill="#e8d274"/><rect x="13" y="6" width="1" height="1.3" fill="#e8d274"/><rect x="14" y="6" width="1" height="1.3" fill="#d4d4d4"/><rect x="0" y="8" width="3" height="1.3" fill="#569cd6"/><rect x="4" y="8" width="8" height="1.3" fill="#9cdcfe"/><rect x="13" y="8" width="1" height="1.3" fill="#d4d4d4"/><rect x="15" y="8" width="5" height="1.3" fill="#569cd6"/><rect x="20" y="8" width="1" height="1.3" fill="#d4d4d4"/><rect x="0" y="10" width="3" height="1.3" fill="#569cd6"/><rect x="4" y="10" width="7" height="1.3" fill="#9cdcfe"/><rect x="12" y="10" width="1" height="1.3" fill="#d4d4d4"/><rect x="14" y="10" width="5" height="1.3" fill="#569cd6"/><rect x="19" y="10" width="1" height="1.3" fill="#d4d4d4"/><rect x="0" y="14" width="13" height="1.3" fill="#6a9955"/><rect x="0" y="16" width="8" height="1.3" fill="#569cd6"/><rect x="9" y="16" width="8" height="1.3" fill="#dcdcaa"/><rect x="17" y="16" width="1" height="1.3" fill="#e8d274"/><rect x="18" y="16" width="1" height="1.3" fill="#e8d274"/><rect x="20" y="16" width="1" height="1.3" fill="#e8d274"/><rect x="4" y="18" width="8" height="1.3" fill="#9cdcfe"/><rect x="13" y="18" width="1" height="1.3" fill="#d4d4d4"/><rect x="15" y="18" width="5" height="1.3" fill="#569cd6"/><rect x="20" y="18" width="1" height="1.3" fill="#d4d4d4"/><rect x="4" y="20" width="7" height="1.3" fill="#9cdcfe"/><rect x="12" y="20" width="1" height="1.3" fill="#d4d4d4"/><rect x="14" y="20" width="5" height="1.3" fill="#569cd6"/><rect x="19" y="20" width="1" height="1.3" fill="#d4d4d4"/><rect x="4" y="22" width="4" height="1.3" fill="#4fc1ff"/><rect x="8" y="22" width="1" height="1.3" fill="#d4d4d4"/><rect x="9" y="22" width="9" height="1.3" fill="#9cdcfe"/><rect x="19" y="22" width="1" height="1.3" fill="#d4d4d4"/><rect x="21" y="22" width="2" height="1.3" fill="#ce9178"/><rect x="23" y="22" width="1" height="1.3" fill="#d4d4d4"/><rect x="4" y="24" width="5" height="1.3" fill="#9cdcfe"/><rect x="10" y="24" width="1" height="1.3" fill="#d4d4d4"/><rect x="12" y="24" width="1" height="1.3" fill="#e8d274"/><rect x="13" y="24" width="1" height="1.3" fill="#e8d274"/><rect x="14" y="24" width="1" height="1.3" fill="#d4d4d4"/><rect x="4" y="28" width="11" height="1.3" fill="#6a9955"/><rect x="4" y="30" width="3" height="1.3" fill="#c586c0"/><rect x="8" y="30" width="1" height="1.3" fill="#e8d274"/><rect x="9" y="30" width="3" height="1.3" fill="#569cd6"/><rect x="13" y="30" width="3" height="1.3" fill="#9cdcfe"/><rect x="17" y="30" width="1" height="1.3" fill="#d4d4d4"/><rect x="19" y="30" width="1" height="1.3" fill="#b5cea8"/><rect x="20" y="30" width="1" height="1.3" fill="#d4d4d4"/><rect x="22" y="30" width="3" height="1.3" fill="#9cdcfe"/><rect x="26" y="30" width="1" height="1.3" fill="#d4d4d4"/><rect x="28" y="30" width="8" height="1.3" fill="#4fc1ff"/><rect x="36" y="30" width="1" height="1.3" fill="#d4d4d4"/><rect x="38" y="30" width="3" height="1.3" fill="#9cdcfe"/><rect x="41" y="30" width="1" height="1.3" fill="#d4d4d4"/><rect x="42" y="30" width="1" height="1.3" fill="#d4d4d4"/><rect x="43" y="30" width="1" height="1.3" fill="#e8d274"/><rect x="45" y="30" width="1" height="1.3" fill="#e8d274"/><rect x="8" y="32" width="5" height="1.3" fill="#9cdcfe"/><rect x="13" y="32" width="1" height="1.3" fill="#e8d274"/><rect x="14" y="32" width="3" height="1.3" fill="#9cdcfe"/><rect x="17" y="32" width="1" height="1.3" fill="#e8d274"/><rect x="19" y="32" width="1" height="1.3" fill="#d4d4d4"/><rect x="21" y="32" width="1" height="1.3" fill="#e8d274"/><rect x="22" y="32" width="1" height="1.3" fill="#e8d274"/><rect x="23" y="32" width="1" height="1.3" fill="#d4d4d4"/><rect x="8" y="34" width="3" height="1.3" fill="#c586c0"/><rect x="12" y="34" width="1" height="1.3" fill="#e8d274"/><rect x="13" y="34" width="3" height="1.3" fill="#569cd6"/><rect x="17" y="34" width="3" height="1.3" fill="#9cdcfe"/><rect x="21" y="34" width="1" height="1.3" fill="#d4d4d4"/><rect x="23" y="34" width="1" height="1.3" fill="#b5cea8"/><rect x="24" y="34" width="1" height="1.3" fill="#d4d4d4"/><rect x="26" y="34" width="3" height="1.3" fill="#9cdcfe"/><rect x="30" y="34" width="1" height="1.3" fill="#d4d4d4"/><rect x="32" y="34" width="8" height="1.3" fill="#4fc1ff"/><rect x="40" y="34" width="1" height="1.3" fill="#d4d4d4"/><rect x="42" y="34" width="3" height="1.3" fill="#9cdcfe"/><rect x="45" y="34" width="1" height="1.3" fill="#d4d4d4"/><rect x="46" y="34" width="1" height="1.3" fill="#d4d4d4"/><rect x="47" y="34" width="1" height="1.3" fill="#e8d274"/><rect x="49" y="34" width="1" height="1.3" fill="#e8d274"/><rect x="12" y="36" width="5" height="1.3" fill="#569cd6"/><rect x="18" y="36" width="4" height="1.3" fill="#4fc1ff"/><rect x="23" y="36" width="1" height="1.3" fill="#d4d4d4"/><rect x="25" y="36" width="8" height="1.3" fill="#9cdcfe"/><rect x="33" y="36" width="1" height="1.3" fill="#d4d4d4"/><rect x="34" y="36" width="13" height="1.3" fill="#dcdcaa"/><rect x="47" y="36" width="1" height="1.3" fill="#e8d274"/><rect x="48" y="36" width="5" height="1.3" fill="#ce9178"/><rect x="53" y="36" width="1" height="1.3" fill="#e8d274"/><rect x="54" y="36" width="1" height="1.3" fill="#d4d4d4"/><rect x="12" y="38" width="4" height="1.3" fill="#4fc1ff"/><rect x="16" y="38" width="1" height="1.3" fill="#d4d4d4"/><rect x="17" y="38" width="9" height="1.3" fill="#9cdcfe"/><rect x="27" y="38" width="1" height="1.3" fill="#d4d4d4"/><rect x="29" y="38" width="6" height="1.3" fill="#ce9178"/><rect x="35" y="38" width="1" height="1.3" fill="#d4d4d4"/><rect x="12" y="40" width="4" height="1.3" fill="#4fc1ff"/><rect x="16" y="40" width="1" height="1.3" fill="#d4d4d4"/><rect x="17" y="40" width="7" height="1.3" fill="#9cdcfe"/><rect x="24" y="40" width="1" height="1.3" fill="#d4d4d4"/><rect x="25" y="40" width="3" height="1.3" fill="#9cdcfe"/><rect x="29" y="40" width="1" height="1.3" fill="#d4d4d4"/><rect x="31" y="40" width="3" height="1.3" fill="#9cdcfe"/><rect x="34" y="40" width="1" height="1.3" fill="#d4d4d4"/><rect x="12" y="42" width="4" height="1.3" fill="#4fc1ff"/><rect x="16" y="42" width="1" height="1.3" fill="#d4d4d4"/><rect x="17" y="42" width="7" height="1.3" fill="#9cdcfe"/><rect x="24" y="42" width="1" height="1.3" fill="#d4d4d4"/><rect x="25" y="42" width="3" height="1.3" fill="#9cdcfe"/><rect x="29" y="42" width="1" height="1.3" fill="#d4d4d4"/><rect x="31" y="42" width="3" height="1.3" fill="#9cdcfe"/><rect x="34" y="42" width="1" height="1.3" fill="#d4d4d4"/><rect x="12" y="44" width="4" height="1.3" fill="#4fc1ff"/><rect x="16" y="44" width="1" height="1.3" fill="#d4d4d4"/><rect x="17" y="44" width="16" height="1.3" fill="#dcdcaa"/><rect x="33" y="44" width="1" height="1.3" fill="#e8d274"/><rect x="34" y="44" width="7" height="1.3" fill="#ce9178"/><rect x="41" y="44" width="1" height="1.3" fill="#d4d4d4"/><rect x="43" y="44" width="1" height="1.3" fill="#e8d274"/><rect x="44" y="44" width="1" height="1.3" fill="#e8d274"/><rect x="46" y="44" width="2" height="1.3" fill="#569cd6"/><rect x="49" y="44" width="10" height="1.3" fill="#dcdcaa"/><rect x="59" y="44" width="1" height="1.3" fill="#e8d274"/><rect x="60" y="44" width="3" height="1.3" fill="#9cdcfe"/><rect x="63" y="44" width="1" height="1.3" fill="#d4d4d4"/><rect x="65" y="44" width="3" height="1.3" fill="#9cdcfe"/><rect x="68" y="44" width="1" height="1.3" fill="#e8d274"/><rect x="69" y="44" width="1" height="1.3" fill="#e8d274"/><rect x="70" y="44" width="1" height="1.3" fill="#d4d4d4"/><rect x="12" y="46" width="4" height="1.3" fill="#4fc1ff"/><rect x="16" y="46" width="1" height="1.3" fill="#d4d4d4"/><rect x="17" y="46" width="16" height="1.3" fill="#dcdcaa"/><rect x="33" y="46" width="1" height="1.3" fill="#e8d274"/><rect x="34" y="46" width="13" height="1.3" fill="#ce9178"/><rect x="47" y="46" width="1" height="1.3" fill="#d4d4d4"/><rect x="49" y="46" width="1" height="1.3" fill="#e8d274"/><rect x="50" y="46" width="1" height="1.3" fill="#9cdcfe"/><rect x="51" y="46" width="1" height="1.3" fill="#e8d274"/><rect x="53" y="46" width="2" height="1.3" fill="#569cd6"/><rect x="56" y="46" width="1" height="1.3" fill="#e8d274"/><rect x="16" y="48" width="1" height="1.3" fill="#9cdcfe"/><rect x="17" y="48" width="1" height="1.3" fill="#d4d4d4"/><rect x="18" y="48" width="14" height="1.3" fill="#dcdcaa"/><rect x="32" y="48" width="1" height="1.3" fill="#e8d274"/><rect x="33" y="48" width="1" height="1.3" fill="#e8d274"/><rect x="34" y="48" width="1" height="1.3" fill="#d4d4d4"/><rect x="16" y="50" width="8" height="1.3" fill="#dcdcaa"/><rect x="24" y="50" width="1" height="1.3" fill="#e8d274"/><rect x="25" y="50" width="3" height="1.3" fill="#9cdcfe"/><rect x="28" y="50" width="1" height="1.3" fill="#d4d4d4"/><rect x="30" y="50" width="3" height="1.3" fill="#9cdcfe"/><rect x="33" y="50" width="1" height="1.3" fill="#e8d274"/><rect x="34" y="50" width="1" height="1.3" fill="#d4d4d4"/><rect x="12" y="52" width="1" height="1.3" fill="#e8d274"/><rect x="13" y="52" width="1" height="1.3" fill="#e8d274"/><rect x="14" y="52" width="1" height="1.3" fill="#d4d4d4"/><rect x="12" y="54" width="4" height="1.3" fill="#4fc1ff"/><rect x="16" y="54" width="1" height="1.3" fill="#d4d4d4"/><rect x="17" y="54" width="11" height="1.3" fill="#dcdcaa"/><rect x="28" y="54" width="1" height="1.3" fill="#e8d274"/><rect x="29" y="54" width="4" height="1.3" fill="#4fc1ff"/><rect x="33" y="54" width="1" height="1.3" fill="#e8d274"/><rect x="34" y="54" width="1" height="1.3" fill="#d4d4d4"/><rect x="12" y="56" width="5" height="1.3" fill="#9cdcfe"/><rect x="17" y="56" width="1" height="1.3" fill="#e8d274"/><rect x="18" y="56" width="3" height="1.3" fill="#9cdcfe"/><rect x="21" y="56" width="1" height="1.3" fill="#e8d274"/><rect x="22" y="56" width="1" height="1.3" fill="#e8d274"/><rect x="23" y="56" width="3" height="1.3" fill="#9cdcfe"/><rect x="26" y="56" width="1" height="1.3" fill="#e8d274"/><rect x="28" y="56" width="1" height="1.3" fill="#d4d4d4"/><rect x="30" y="56" width="1" height="1.3" fill="#e8d274"/><rect x="16" y="58" width="7" height="1.3" fill="#9cdcfe"/><rect x="23" y="58" width="1" height="1.3" fill="#d4d4d4"/><rect x="25" y="58" width="4" height="1.3" fill="#4fc1ff"/><rect x="29" y="58" width="1" height="1.3" fill="#d4d4d4"/><rect x="16" y="60" width="6" height="1.3" fill="#9cdcfe"/><rect x="22" y="60" width="1" height="1.3" fill="#d4d4d4"/><rect x="24" y="60" width="5" height="1.3" fill="#569cd6"/><rect x="29" y="60" width="1" height="1.3" fill="#d4d4d4"/><rect x="16" y="62" width="10" height="1.3" fill="#9cdcfe"/><rect x="26" y="62" width="1" height="1.3" fill="#d4d4d4"/><rect x="28" y="62" width="5" height="1.3" fill="#569cd6"/><rect x="33" y="62" width="1" height="1.3" fill="#d4d4d4"/><rect x="16" y="64" width="9" height="1.3" fill="#9cdcfe"/><rect x="25" y="64" width="1" height="1.3" fill="#d4d4d4"/><rect x="27" y="64" width="5" height="1.3" fill="#569cd6"/><rect x="32" y="64" width="1" height="1.3" fill="#d4d4d4"/><rect x="16" y="66" width="13" height="1.3" fill="#9cdcfe"/><rect x="29" y="66" width="1" height="1.3" fill="#d4d4d4"/><rect x="31" y="66" width="1" height="1.3" fill="#b5cea8"/><rect x="12" y="68" width="1" height="1.3" fill="#e8d274"/><rect x="13" y="68" width="1" height="1.3" fill="#d4d4d4"/><rect x="8" y="70" width="1" height="1.3" fill="#e8d274"/><rect x="4" y="72" width="1" height="1.3" fill="#e8d274"/><rect x="4" y="76" width="11" height="1.3" fill="#6a9955"/><rect x="4" y="78" width="10" height="1.3" fill="#dcdcaa"/><rect x="14" y="78" width="1" height="1.3" fill="#e8d274"/><rect x="15" y="78" width="1" height="1.3" fill="#e8d274"/><rect x="16" y="78" width="1" height="1.3" fill="#d4d4d4"/><rect x="4" y="82" width="17" height="1.3" fill="#6a9955"/><rect x="4" y="84" width="22" height="1.3" fill="#dcdcaa"/><rect x="26" y="84" width="1" height="1.3" fill="#e8d274"/><rect x="27" y="84" width="1" height="1.3" fill="#e8d274"/><rect x="28" y="84" width="1" height="1.3" fill="#d4d4d4"/><rect x="0" y="86" width="1" height="1.3" fill="#e8d274"/><rect x="0" y="90" width="11" height="1.3" fill="#6a9955"/><rect x="0" y="92" width="8" height="1.3" fill="#569cd6"/><rect x="9" y="92" width="10" height="1.3" fill="#dcdcaa"/><rect x="19" y="92" width="1" height="1.3" fill="#e8d274"/><rect x="20" y="92" width="1" height="1.3" fill="#e8d274"/><rect x="22" y="92" width="1" height="1.3" fill="#e8d274"/><rect x="4" y="94" width="3" height="1.3" fill="#569cd6"/><rect x="8" y="94" width="11" height="1.3" fill="#9cdcfe"/><rect x="20" y="94" width="1" height="1.3" fill="#d4d4d4"/><rect x="22" y="94" width="1" height="1.3" fill="#b5cea8"/><rect x="23" y="94" width="1" height="1.3" fill="#d4d4d4"/><rect x="4" y="96" width="5" height="1.3" fill="#c586c0"/><rect x="10" y="96" width="1" height="1.3" fill="#e8d274"/><rect x="11" y="96" width="11" height="1.3" fill="#9cdcfe"/><rect x="23" y="96" width="1" height="1.3" fill="#d4d4d4"/><rect x="25" y="96" width="9" height="1.3" fill="#4fc1ff"/><rect x="34" y="96" width="1" height="1.3" fill="#e8d274"/><rect x="36" y="96" width="1" height="1.3" fill="#e8d274"/><rect x="8" y="98" width="5" height="1.3" fill="#569cd6"/><rect x="14" y="98" width="3" height="1.3" fill="#4fc1ff"/><rect x="18" y="98" width="1" height="1.3" fill="#d4d4d4"/><rect x="20" y="98" width="4" height="1.3" fill="#9cdcfe"/><rect x="24" y="98" width="1" height="1.3" fill="#d4d4d4"/><rect x="25" y="98" width="5" height="1.3" fill="#dcdcaa"/><rect x="30" y="98" width="1" height="1.3" fill="#e8d274"/><rect x="31" y="98" width="4" height="1.3" fill="#9cdcfe"/><rect x="35" y="98" width="1" height="1.3" fill="#d4d4d4"/><rect x="36" y="98" width="6" height="1.3" fill="#dcdcaa"/><rect x="42" y="98" width="1" height="1.3" fill="#e8d274"/><rect x="43" y="98" width="1" height="1.3" fill="#e8d274"/><rect x="45" y="98" width="1" height="1.3" fill="#d4d4d4"/><rect x="47" y="98" width="8" height="1.3" fill="#4fc1ff"/><rect x="55" y="98" width="1" height="1.3" fill="#e8d274"/><rect x="56" y="98" width="1" height="1.3" fill="#d4d4d4"/><rect x="8" y="100" width="5" height="1.3" fill="#569cd6"/><rect x="14" y="100" width="3" height="1.3" fill="#4fc1ff"/><rect x="18" y="100" width="1" height="1.3" fill="#d4d4d4"/><rect x="20" y="100" width="4" height="1.3" fill="#9cdcfe"/><rect x="24" y="100" width="1" height="1.3" fill="#d4d4d4"/><rect x="25" y="100" width="5" height="1.3" fill="#dcdcaa"/><rect x="30" y="100" width="1" height="1.3" fill="#e8d274"/><rect x="31" y="100" width="4" height="1.3" fill="#9cdcfe"/><rect x="35" y="100" width="1" height="1.3" fill="#d4d4d4"/><rect x="36" y="100" width="6" height="1.3" fill="#dcdcaa"/><rect x="42" y="100" width="1" height="1.3" fill="#e8d274"/><rect x="43" y="100" width="1" height="1.3" fill="#e8d274"/><rect x="45" y="100" width="1" height="1.3" fill="#d4d4d4"/><rect x="47" y="100" width="8" height="1.3" fill="#4fc1ff"/><rect x="55" y="100" width="1" height="1.3" fill="#e8d274"/><rect x="56" y="100" width="1" height="1.3" fill="#d4d4d4"/><rect x="8" y="102" width="2" height="1.3" fill="#c586c0"/><rect x="11" y="102" width="1" height="1.3" fill="#e8d274"/><rect x="12" y="102" width="1" height="1.3" fill="#d4d4d4"/><rect x="13" y="102" width="5" height="1.3" fill="#9cdcfe"/><rect x="18" y="102" width="1" height="1.3" fill="#e8d274"/><rect x="19" y="102" width="3" height="1.3" fill="#9cdcfe"/><rect x="22" y="102" width="1" height="1.3" fill="#e8d274"/><rect x="23" y="102" width="1" height="1.3" fill="#e8d274"/><rect x="24" y="102" width="3" height="1.3" fill="#9cdcfe"/><rect x="27" y="102" width="1" height="1.3" fill="#e8d274"/><rect x="28" y="102" width="1" height="1.3" fill="#d4d4d4"/><rect x="29" y="102" width="6" height="1.3" fill="#9cdcfe"/><rect x="35" y="102" width="1" height="1.3" fill="#e8d274"/><rect x="37" y="102" width="1" height="1.3" fill="#e8d274"/><rect x="12" y="104" width="5" height="1.3" fill="#9cdcfe"/><rect x="17" y="104" width="1" height="1.3" fill="#e8d274"/><rect x="18" y="104" width="3" height="1.3" fill="#9cdcfe"/><rect x="21" y="104" width="1" height="1.3" fill="#e8d274"/><rect x="22" y="104" width="1" height="1.3" fill="#e8d274"/><rect x="23" y="104" width="3" height="1.3" fill="#9cdcfe"/><rect x="26" y="104" width="1" height="1.3" fill="#e8d274"/><rect x="27" y="104" width="1" height="1.3" fill="#d4d4d4"/><rect x="28" y="104" width="6" height="1.3" fill="#9cdcfe"/><rect x="35" y="104" width="1" height="1.3" fill="#d4d4d4"/><rect x="37" y="104" width="4" height="1.3" fill="#569cd6"/><rect x="41" y="104" width="1" height="1.3" fill="#d4d4d4"/><rect x="12" y="106" width="11" height="1.3" fill="#9cdcfe"/><rect x="23" y="106" width="1" height="1.3" fill="#d4d4d4"/><rect x="24" y="106" width="1" height="1.3" fill="#d4d4d4"/><rect x="25" y="106" width="1" height="1.3" fill="#d4d4d4"/><rect x="8" y="108" width="1" height="1.3" fill="#e8d274"/><rect x="4" y="110" width="1" height="1.3" fill="#e8d274"/><rect x="0" y="112" width="1" height="1.3" fill="#e8d274"/><rect x="0" y="116" width="17" height="1.3" fill="#6a9955"/><rect x="0" y="118" width="8" height="1.3" fill="#569cd6"/><rect x="9" y="118" width="22" height="1.3" fill="#dcdcaa"/><rect x="31" y="118" width="1" height="1.3" fill="#e8d274"/><rect x="32" y="118" width="1" height="1.3" fill="#e8d274"/><rect x="34" y="118" width="1" height="1.3" fill="#e8d274"/><rect x="4" y="120" width="3" height="1.3" fill="#c586c0"/><rect x="8" y="120" width="1" height="1.3" fill="#e8d274"/><rect x="9" y="120" width="3" height="1.3" fill="#569cd6"/><rect x="13" y="120" width="3" height="1.3" fill="#9cdcfe"/><rect x="17" y="120" width="1" height="1.3" fill="#d4d4d4"/><rect x="19" y="120" width="1" height="1.3" fill="#b5cea8"/><rect x="20" y="120" width="1" height="1.3" fill="#d4d4d4"/><rect x="22" y="120" width="3" height="1.3" fill="#9cdcfe"/><rect x="26" y="120" width="1" height="1.3" fill="#d4d4d4"/><rect x="28" y="120" width="8" height="1.3" fill="#4fc1ff"/><rect x="36" y="120" width="1" height="1.3" fill="#d4d4d4"/><rect x="38" y="120" width="3" height="1.3" fill="#9cdcfe"/><rect x="41" y="120" width="1" height="1.3" fill="#d4d4d4"/><rect x="42" y="120" width="1" height="1.3" fill="#d4d4d4"/><rect x="43" y="120" width="1" height="1.3" fill="#e8d274"/><rect x="45" y="120" width="1" height="1.3" fill="#e8d274"/><rect x="8" y="122" width="3" height="1.3" fill="#c586c0"/><rect x="12" y="122" width="1" height="1.3" fill="#e8d274"/><rect x="13" y="122" width="3" height="1.3" fill="#569cd6"/><rect x="17" y="122" width="3" height="1.3" fill="#9cdcfe"/><rect x="21" y="122" width="1" height="1.3" fill="#d4d4d4"/><rect x="23" y="122" width="1" height="1.3" fill="#b5cea8"/><rect x="24" y="122" width="1" height="1.3" fill="#d4d4d4"/><rect x="26" y="122" width="3" height="1.3" fill="#9cdcfe"/><rect x="30" y="122" width="1" height="1.3" fill="#d4d4d4"/><rect x="32" y="122" width="8" height="1.3" fill="#4fc1ff"/><rect x="40" y="122" width="1" height="1.3" fill="#d4d4d4"/><rect x="42" y="122" width="3" height="1.3" fill="#9cdcfe"/><rect x="45" y="122" width="1" height="1.3" fill="#d4d4d4"/><rect x="46" y="122" width="1" height="1.3" fill="#d4d4d4"/><rect x="47" y="122" width="1" height="1.3" fill="#e8d274"/><rect x="49" y="122" width="1" height="1.3" fill="#e8d274"/><rect x="12" y="124" width="2" height="1.3" fill="#c586c0"/><rect x="15" y="124" width="1" height="1.3" fill="#e8d274"/><rect x="16" y="124" width="1" height="1.3" fill="#d4d4d4"/><rect x="17" y="124" width="5" height="1.3" fill="#9cdcfe"/><rect x="22" y="124" width="1" height="1.3" fill="#e8d274"/><rect x="23" y="124" width="3" height="1.3" fill="#9cdcfe"/><rect x="26" y="124" width="1" height="1.3" fill="#e8d274"/><rect x="27" y="124" width="1" height="1.3" fill="#e8d274"/><rect x="28" y="124" width="3" height="1.3" fill="#9cdcfe"/><rect x="31" y="124" width="1" height="1.3" fill="#e8d274"/><rect x="32" y="124" width="1" height="1.3" fill="#d4d4d4"/><rect x="33" y="124" width="6" height="1.3" fill="#9cdcfe"/><rect x="39" y="124" width="1" height="1.3" fill="#e8d274"/><rect x="41" y="124" width="1" height="1.3" fill="#e8d274"/><rect x="16" y="126" width="3" height="1.3" fill="#569cd6"/><rect x="20" y="126" width="5" height="1.3" fill="#9cdcfe"/><rect x="26" y="126" width="1" height="1.3" fill="#d4d4d4"/><rect x="28" y="126" width="1" height="1.3" fill="#b5cea8"/><rect x="29" y="126" width="1" height="1.3" fill="#d4d4d4"/><rect x="16" y="128" width="3" height="1.3" fill="#c586c0"/><rect x="20" y="128" width="1" height="1.3" fill="#e8d274"/><rect x="21" y="128" width="3" height="1.3" fill="#569cd6"/><rect x="25" y="128" width="1" height="1.3" fill="#9cdcfe"/><rect x="27" y="128" width="1" height="1.3" fill="#d4d4d4"/><rect x="29" y="128" width="1" height="1.3" fill="#d4d4d4"/><rect x="30" y="128" width="1" height="1.3" fill="#b5cea8"/><rect x="31" y="128" width="1" height="1.3" fill="#d4d4d4"/><rect x="33" y="128" width="1" height="1.3" fill="#9cdcfe"/><rect x="35" y="128" width="1" height="1.3" fill="#d4d4d4"/><rect x="36" y="128" width="1" height="1.3" fill="#d4d4d4"/><rect x="38" y="128" width="1" height="1.3" fill="#b5cea8"/><rect x="39" y="128" width="1" height="1.3" fill="#d4d4d4"/><rect x="41" y="128" width="1" height="1.3" fill="#9cdcfe"/><rect x="42" y="128" width="1" height="1.3" fill="#d4d4d4"/><rect x="43" y="128" width="1" height="1.3" fill="#d4d4d4"/><rect x="44" y="128" width="1" height="1.3" fill="#e8d274"/><rect x="46" y="128" width="1" height="1.3" fill="#e8d274"/><rect x="20" y="130" width="3" height="1.3" fill="#c586c0"/><rect x="24" y="130" width="1" height="1.3" fill="#e8d274"/><rect x="25" y="130" width="3" height="1.3" fill="#569cd6"/><rect x="29" y="130" width="1" height="1.3" fill="#9cdcfe"/><rect x="31" y="130" width="1" height="1.3" fill="#d4d4d4"/><rect x="33" y="130" width="1" height="1.3" fill="#d4d4d4"/><rect x="34" y="130" width="1" height="1.3" fill="#b5cea8"/><rect x="35" y="130" width="1" height="1.3" fill="#d4d4d4"/><rect x="37" y="130" width="1" height="1.3" fill="#9cdcfe"/><rect x="39" y="130" width="1" height="1.3" fill="#d4d4d4"/><rect x="40" y="130" width="1" height="1.3" fill="#d4d4d4"/><rect x="42" y="130" width="1" height="1.3" fill="#b5cea8"/><rect x="43" y="130" width="1" height="1.3" fill="#d4d4d4"/><rect x="45" y="130" width="1" height="1.3" fill="#9cdcfe"/><rect x="46" y="130" width="1" height="1.3" fill="#d4d4d4"/><rect x="47" y="130" width="1" height="1.3" fill="#d4d4d4"/><rect x="48" y="130" width="1" height="1.3" fill="#e8d274"/><rect x="50" y="130" width="1" height="1.3" fill="#e8d274"/><rect x="24" y="132" width="5" height="1.3" fill="#569cd6"/><rect x="30" y="132" width="6" height="1.3" fill="#4fc1ff"/><rect x="37" y="132" width="1" height="1.3" fill="#d4d4d4"/><rect x="39" y="132" width="3" height="1.3" fill="#9cdcfe"/><rect x="43" y="132" width="1" height="1.3" fill="#d4d4d4"/><rect x="45" y="132" width="1" height="1.3" fill="#9cdcfe"/><rect x="46" y="132" width="1" height="1.3" fill="#d4d4d4"/><rect x="24" y="134" width="5" height="1.3" fill="#569cd6"/><rect x="30" y="134" width="6" height="1.3" fill="#4fc1ff"/><rect x="37" y="134" width="1" height="1.3" fill="#d4d4d4"/><rect x="39" y="134" width="3" height="1.3" fill="#9cdcfe"/><rect x="43" y="134" width="1" height="1.3" fill="#d4d4d4"/><rect x="45" y="134" width="1" height="1.3" fill="#9cdcfe"/><rect x="46" y="134" width="1" height="1.3" fill="#d4d4d4"/><rect x="24" y="136" width="2" height="1.3" fill="#c586c0"/><rect x="27" y="136" width="1" height="1.3" fill="#e8d274"/><rect x="28" y="136" width="6" height="1.3" fill="#4fc1ff"/><rect x="35" y="136" width="1" height="1.3" fill="#d4d4d4"/><rect x="36" y="136" width="1" height="1.3" fill="#d4d4d4"/><rect x="38" y="136" width="1" height="1.3" fill="#b5cea8"/><rect x="40" y="136" width="1" height="1.3" fill="#d4d4d4"/><rect x="41" y="136" width="1" height="1.3" fill="#d4d4d4"/><rect x="43" y="136" width="6" height="1.3" fill="#4fc1ff"/><rect x="50" y="136" width="1" height="1.3" fill="#d4d4d4"/><rect x="52" y="136" width="8" height="1.3" fill="#4fc1ff"/><rect x="61" y="136" width="1" height="1.3" fill="#d4d4d4"/><rect x="62" y="136" width="1" height="1.3" fill="#d4d4d4"/><rect x="64" y="136" width="6" height="1.3" fill="#4fc1ff"/><rect x="71" y="136" width="1" height="1.3" fill="#d4d4d4"/><rect x="72" y="136" width="1" height="1.3" fill="#d4d4d4"/><rect x="74" y="136" width="1" height="1.3" fill="#b5cea8"/><rect x="76" y="136" width="1" height="1.3" fill="#d4d4d4"/><rect x="77" y="136" width="1" height="1.3" fill="#d4d4d4"/><rect x="79" y="136" width="6" height="1.3" fill="#4fc1ff"/><rect x="86" y="136" width="1" height="1.3" fill="#d4d4d4"/><rect x="88" y="136" width="8" height="1.3" fill="#4fc1ff"/><rect x="96" y="136" width="1" height="1.3" fill="#e8d274"/><rect x="98" y="136" width="1" height="1.3" fill="#e8d274"/><rect x="28" y="138" width="2" height="1.3" fill="#c586c0"/><rect x="31" y="138" width="1" height="1.3" fill="#e8d274"/><rect x="32" y="138" width="5" height="1.3" fill="#9cdcfe"/><rect x="37" y="138" width="1" height="1.3" fill="#e8d274"/><rect x="38" y="138" width="6" height="1.3" fill="#4fc1ff"/><rect x="44" y="138" width="1" height="1.3" fill="#e8d274"/><rect x="45" y="138" width="1" height="1.3" fill="#e8d274"/><rect x="46" y="138" width="6" height="1.3" fill="#4fc1ff"/><rect x="52" y="138" width="1" height="1.3" fill="#e8d274"/><rect x="53" y="138" width="1" height="1.3" fill="#d4d4d4"/><rect x="54" y="138" width="6" height="1.3" fill="#9cdcfe"/><rect x="60" y="138" width="1" height="1.3" fill="#e8d274"/><rect x="62" y="138" width="1" height="1.3" fill="#e8d274"/><rect x="32" y="140" width="5" height="1.3" fill="#9cdcfe"/><rect x="37" y="140" width="1" height="1.3" fill="#d4d4d4"/><rect x="38" y="140" width="1" height="1.3" fill="#d4d4d4"/><rect x="39" y="140" width="1" height="1.3" fill="#d4d4d4"/><rect x="28" y="142" width="1" height="1.3" fill="#e8d274"/><rect x="24" y="144" width="1" height="1.3" fill="#e8d274"/><rect x="20" y="146" width="1" height="1.3" fill="#e8d274"/><rect x="16" y="148" width="1" height="1.3" fill="#e8d274"/><rect x="16" y="150" width="5" height="1.3" fill="#9cdcfe"/><rect x="21" y="150" width="1" height="1.3" fill="#e8d274"/><rect x="22" y="150" width="3" height="1.3" fill="#9cdcfe"/><rect x="25" y="150" width="1" height="1.3" fill="#e8d274"/><rect x="26" y="150" width="1" height="1.3" fill="#e8d274"/><rect x="27" y="150" width="3" height="1.3" fill="#9cdcfe"/><rect x="30" y="150" width="1" height="1.3" fill="#e8d274"/><rect x="31" y="150" width="1" height="1.3" fill="#d4d4d4"/><rect x="32" y="150" width="13" height="1.3" fill="#9cdcfe"/><rect x="46" y="150" width="1" height="1.3" fill="#d4d4d4"/><rect x="48" y="150" width="5" height="1.3" fill="#9cdcfe"/><rect x="53" y="150" width="1" height="1.3" fill="#d4d4d4"/><rect x="12" y="152" width="1" height="1.3" fill="#e8d274"/><rect x="8" y="154" width="1" height="1.3" fill="#e8d274"/><rect x="4" y="156" width="1" height="1.3" fill="#e8d274"/><rect x="0" y="158" width="1" height="1.3" fill="#e8d274"/><rect x="0" y="162" width="11" height="1.3" fill="#6a9955"/><rect x="0" y="164" width="8" height="1.3" fill="#569cd6"/><rect x="9" y="164" width="10" height="1.3" fill="#dcdcaa"/><rect x="19" y="164" width="1" height="1.3" fill="#e8d274"/><rect x="20" y="164" width="3" height="1.3" fill="#9cdcfe"/><rect x="23" y="164" width="1" height="1.3" fill="#d4d4d4"/><rect x="25" y="164" width="3" height="1.3" fill="#9cdcfe"/><rect x="28" y="164" width="1" height="1.3" fill="#e8d274"/><rect x="30" y="164" width="1" height="1.3" fill="#e8d274"/><rect x="4" y="166" width="2" height="1.3" fill="#c586c0"/><rect x="7" y="166" width="1" height="1.3" fill="#e8d274"/><rect x="8" y="166" width="8" height="1.3" fill="#9cdcfe"/><rect x="17" y="166" width="1" height="1.3" fill="#d4d4d4"/><rect x="18" y="166" width="1" height="1.3" fill="#d4d4d4"/><rect x="20" y="166" width="7" height="1.3" fill="#9cdcfe"/><rect x="28" y="166" width="1" height="1.3" fill="#d4d4d4"/><rect x="29" y="166" width="1" height="1.3" fill="#d4d4d4"/><rect x="31" y="166" width="5" height="1.3" fill="#9cdcfe"/><rect x="36" y="166" width="1" height="1.3" fill="#e8d274"/><rect x="37" y="166" width="3" height="1.3" fill="#9cdcfe"/><rect x="40" y="166" width="1" height="1.3" fill="#e8d274"/><rect x="41" y="166" width="1" height="1.3" fill="#e8d274"/><rect x="42" y="166" width="3" height="1.3" fill="#9cdcfe"/><rect x="45" y="166" width="1" height="1.3" fill="#e8d274"/><rect x="46" y="166" width="1" height="1.3" fill="#d4d4d4"/><rect x="47" y="166" width="10" height="1.3" fill="#9cdcfe"/><rect x="58" y="166" width="1" height="1.3" fill="#d4d4d4"/><rect x="59" y="166" width="1" height="1.3" fill="#d4d4d4"/><rect x="61" y="166" width="5" height="1.3" fill="#9cdcfe"/><rect x="66" y="166" width="1" height="1.3" fill="#e8d274"/><rect x="67" y="166" width="3" height="1.3" fill="#9cdcfe"/><rect x="70" y="166" width="1" height="1.3" fill="#e8d274"/><rect x="71" y="166" width="1" height="1.3" fill="#e8d274"/><rect x="72" y="166" width="3" height="1.3" fill="#9cdcfe"/><rect x="75" y="166" width="1" height="1.3" fill="#e8d274"/><rect x="76" y="166" width="1" height="1.3" fill="#d4d4d4"/><rect x="77" y="166" width="9" height="1.3" fill="#9cdcfe"/><rect x="86" y="166" width="1" height="1.3" fill="#e8d274"/><rect x="88" y="166" width="1" height="1.3" fill="#e8d274"/><rect x="8" y="168" width="6" height="1.3" fill="#c586c0"/><rect x="14" y="168" width="1" height="1.3" fill="#d4d4d4"/><rect x="4" y="170" width="1" height="1.3" fill="#e8d274"/><rect x="4" y="174" width="5" height="1.3" fill="#569cd6"/><rect x="10" y="174" width="4" height="1.3" fill="#4fc1ff"/><rect x="15" y="174" width="1" height="1.3" fill="#d4d4d4"/><rect x="17" y="174" width="5" height="1.3" fill="#9cdcfe"/><rect x="22" y="174" width="1" height="1.3" fill="#e8d274"/><rect x="23" y="174" width="3" height="1.3" fill="#9cdcfe"/><rect x="26" y="174" width="1" height="1.3" fill="#e8d274"/><rect x="27" y="174" width="1" height="1.3" fill="#e8d274"/><rect x="28" y="174" width="3" height="1.3" fill="#9cdcfe"/><rect x="31" y="174" width="1" height="1.3" fill="#e8d274"/><rect x="32" y="174" width="1" height="1.3" fill="#d4d4d4"/><rect x="4" y="176" width="4" height="1.3" fill="#4fc1ff"/><rect x="8" y="176" width="1" height="1.3" fill="#d4d4d4"/><rect x="9" y="176" width="10" height="1.3" fill="#9cdcfe"/><rect x="20" y="176" width="1" height="1.3" fill="#d4d4d4"/><rect x="22" y="176" width="4" height="1.3" fill="#569cd6"/><rect x="26" y="176" width="1" height="1.3" fill="#d4d4d4"/><rect x="4" y="178" width="4" height="1.3" fill="#4fc1ff"/><rect x="8" y="178" width="1" height="1.3" fill="#d4d4d4"/><rect x="9" y="178" width="7" height="1.3" fill="#9cdcfe"/><rect x="16" y="178" width="1" height="1.3" fill="#d4d4d4"/><rect x="17" y="178" width="9" height="1.3" fill="#9cdcfe"/><rect x="26" y="178" width="1" height="1.3" fill="#d4d4d4"/><rect x="27" y="178" width="3" height="1.3" fill="#dcdcaa"/><rect x="30" y="178" width="1" height="1.3" fill="#e8d274"/><rect x="31" y="178" width="10" height="1.3" fill="#ce9178"/><rect x="41" y="178" width="1" height="1.3" fill="#e8d274"/><rect x="42" y="178" width="1" height="1.3" fill="#d4d4d4"/><rect x="4" y="182" width="2" height="1.3" fill="#c586c0"/><rect x="7" y="182" width="1" height="1.3" fill="#e8d274"/><rect x="8" y="182" width="4" height="1.3" fill="#4fc1ff"/><rect x="12" y="182" width="1" height="1.3" fill="#d4d4d4"/><rect x="13" y="182" width="6" height="1.3" fill="#9cdcfe"/><rect x="19" y="182" width="1" height="1.3" fill="#e8d274"/><rect x="21" y="182" width="1" height="1.3" fill="#e8d274"/><rect x="8" y="184" width="19" height="1.3" fill="#6a9955"/><rect x="8" y="186" width="4" height="1.3" fill="#4fc1ff"/><rect x="12" y="186" width="1" height="1.3" fill="#d4d4d4"/><rect x="13" y="186" width="7" height="1.3" fill="#9cdcfe"/><rect x="20" y="186" width="1" height="1.3" fill="#d4d4d4"/><rect x="21" y="186" width="9" height="1.3" fill="#9cdcfe"/><rect x="30" y="186" width="1" height="1.3" fill="#d4d4d4"/><rect x="31" y="186" width="3" height="1.3" fill="#dcdcaa"/><rect x="34" y="186" width="1" height="1.3" fill="#e8d274"/><rect x="35" y="186" width="6" height="1.3" fill="#ce9178"/><rect x="41" y="186" width="1" height="1.3" fill="#e8d274"/><rect x="42" y="186" width="1" height="1.3" fill="#d4d4d4"/><rect x="8" y="188" width="8" height="1.3" fill="#9cdcfe"/><rect x="17" y="188" width="1" height="1.3" fill="#d4d4d4"/><rect x="19" y="188" width="4" height="1.3" fill="#569cd6"/><rect x="23" y="188" width="1" height="1.3" fill="#d4d4d4"/><rect x="8" y="190" width="5" height="1.3" fill="#dcdcaa"/><rect x="13" y="190" width="1" height="1.3" fill="#e8d274"/><rect x="14" y="190" width="12" height="1.3" fill="#ce9178"/><rect x="26" y="190" width="1" height="1.3" fill="#e8d274"/><rect x="27" y="190" width="1" height="1.3" fill="#d4d4d4"/><rect x="8" y="192" width="6" height="1.3" fill="#c586c0"/><rect x="14" y="192" width="1" height="1.3" fill="#d4d4d4"/><rect x="4" y="194" width="1" height="1.3" fill="#e8d274"/><rect x="4" y="198" width="17" height="1.3" fill="#6a9955"/><rect x="4" y="200" width="2" height="1.3" fill="#c586c0"/><rect x="7" y="200" width="1" height="1.3" fill="#e8d274"/><rect x="8" y="200" width="4" height="1.3" fill="#4fc1ff"/><rect x="12" y="200" width="1" height="1.3" fill="#d4d4d4"/><rect x="13" y="200" width="13" height="1.3" fill="#9cdcfe"/><rect x="27" y="200" width="1" height="1.3" fill="#d4d4d4"/><rect x="29" y="200" width="1" height="1.3" fill="#b5cea8"/><rect x="30" y="200" width="1" height="1.3" fill="#e8d274"/><rect x="32" y="200" width="1" height="1.3" fill="#e8d274"/><rect x="8" y="202" width="4" height="1.3" fill="#4fc1ff"/><rect x="12" y="202" width="1" height="1.3" fill="#d4d4d4"/><rect x="13" y="202" width="7" height="1.3" fill="#9cdcfe"/><rect x="20" y="202" width="1" height="1.3" fill="#d4d4d4"/><rect x="21" y="202" width="11" height="1.3" fill="#9cdcfe"/><rect x="33" y="202" width="1" height="1.3" fill="#d4d4d4"/><rect x="35" y="202" width="4" height="1.3" fill="#4fc1ff"/><rect x="39" y="202" width="1" height="1.3" fill="#d4d4d4"/><rect x="40" y="202" width="13" height="1.3" fill="#9cdcfe"/><rect x="53" y="202" width="1" height="1.3" fill="#d4d4d4"/><rect x="8" y="204" width="4" height="1.3" fill="#4fc1ff"/><rect x="12" y="204" width="1" height="1.3" fill="#d4d4d4"/><rect x="13" y="204" width="7" height="1.3" fill="#9cdcfe"/><rect x="20" y="204" width="1" height="1.3" fill="#d4d4d4"/><rect x="21" y="204" width="9" height="1.3" fill="#9cdcfe"/><rect x="30" y="204" width="1" height="1.3" fill="#d4d4d4"/><rect x="31" y="204" width="3" height="1.3" fill="#dcdcaa"/><rect x="34" y="204" width="1" height="1.3" fill="#e8d274"/><rect x="35" y="204" width="8" height="1.3" fill="#ce9178"/><rect x="44" y="204" width="1" height="1.3" fill="#d4d4d4"/><rect x="46" y="204" width="4" height="1.3" fill="#4fc1ff"/><rect x="50" y="204" width="1" height="1.3" fill="#d4d4d4"/><rect x="51" y="204" width="13" height="1.3" fill="#9cdcfe"/><rect x="64" y="204" width="1" height="1.3" fill="#e8d274"/><rect x="65" y="204" width="1" height="1.3" fill="#d4d4d4"/><rect x="4" y="206" width="1" height="1.3" fill="#e8d274"/><rect x="4" y="210" width="20" height="1.3" fill="#6a9955"/><rect x="4" y="212" width="2" height="1.3" fill="#c586c0"/><rect x="7" y="212" width="1" height="1.3" fill="#e8d274"/><rect x="8" y="212" width="4" height="1.3" fill="#4fc1ff"/><rect x="12" y="212" width="1" height="1.3" fill="#d4d4d4"/><rect x="13" y="212" width="13" height="1.3" fill="#9cdcfe"/><rect x="27" y="212" width="1" height="1.3" fill="#d4d4d4"/><rect x="28" y="212" width="1" height="1.3" fill="#d4d4d4"/><rect x="29" y="212" width="1" height="1.3" fill="#d4d4d4"/><rect x="31" y="212" width="1" height="1.3" fill="#b5cea8"/><rect x="32" y="212" width="1" height="1.3" fill="#e8d274"/><rect x="34" y="212" width="1" height="1.3" fill="#e8d274"/><rect x="8" y="214" width="3" height="1.3" fill="#c586c0"/><rect x="12" y="214" width="1" height="1.3" fill="#e8d274"/><rect x="13" y="214" width="3" height="1.3" fill="#569cd6"/><rect x="17" y="214" width="1" height="1.3" fill="#9cdcfe"/><rect x="19" y="214" width="1" height="1.3" fill="#d4d4d4"/><rect x="21" y="214" width="1" height="1.3" fill="#d4d4d4"/><rect x="22" y="214" width="1" height="1.3" fill="#b5cea8"/><rect x="23" y="214" width="1" height="1.3" fill="#d4d4d4"/><rect x="25" y="214" width="1" height="1.3" fill="#9cdcfe"/><rect x="27" y="214" width="1" height="1.3" fill="#d4d4d4"/><rect x="28" y="214" width="1" height="1.3" fill="#d4d4d4"/><rect x="30" y="214" width="1" height="1.3" fill="#b5cea8"/><rect x="31" y="214" width="1" height="1.3" fill="#d4d4d4"/><rect x="33" y="214" width="1" height="1.3" fill="#9cdcfe"/><rect x="34" y="214" width="1" height="1.3" fill="#d4d4d4"/><rect x="35" y="214" width="1" height="1.3" fill="#d4d4d4"/><rect x="36" y="214" width="1" height="1.3" fill="#e8d274"/><rect x="38" y="214" width="1" height="1.3" fill="#e8d274"/><rect x="12" y="216" width="3" height="1.3" fill="#c586c0"/><rect x="16" y="216" width="1" height="1.3" fill="#e8d274"/><rect x="17" y="216" width="3" height="1.3" fill="#569cd6"/><rect x="21" y="216" width="1" height="1.3" fill="#9cdcfe"/><rect x="23" y="216" width="1" height="1.3" fill="#d4d4d4"/><rect x="25" y="216" width="1" height="1.3" fill="#d4d4d4"/><rect x="26" y="216" width="1" height="1.3" fill="#b5cea8"/><rect x="27" y="216" width="1" height="1.3" fill="#d4d4d4"/><rect x="29" y="216" width="1" height="1.3" fill="#9cdcfe"/><rect x="31" y="216" width="1" height="1.3" fill="#d4d4d4"/><rect x="32" y="216" width="1" height="1.3" fill="#d4d4d4"/><rect x="34" y="216" width="1" height="1.3" fill="#b5cea8"/><rect x="35" y="216" width="1" height="1.3" fill="#d4d4d4"/><rect x="37" y="216" width="1" height="1.3" fill="#9cdcfe"/><rect x="38" y="216" width="1" height="1.3" fill="#d4d4d4"/><rect x="39" y="216" width="1" height="1.3" fill="#d4d4d4"/><rect x="40" y="216" width="1" height="1.3" fill="#e8d274"/><rect x="42" y="216" width="1" height="1.3" fill="#e8d274"/><rect x="16" y="218" width="2" height="1.3" fill="#c586c0"/><rect x="19" y="218" width="1" height="1.3" fill="#e8d274"/><rect x="20" y="218" width="3" height="1.3" fill="#9cdcfe"/><rect x="24" y="218" width="1" height="1.3" fill="#d4d4d4"/><rect x="26" y="218" width="1" height="1.3" fill="#9cdcfe"/><rect x="28" y="218" width="1" height="1.3" fill="#d4d4d4"/><rect x="29" y="218" width="1" height="1.3" fill="#d4d4d4"/><rect x="31" y="218" width="1" height="1.3" fill="#b5cea8"/><rect x="33" y="218" width="1" height="1.3" fill="#d4d4d4"/><rect x="34" y="218" width="1" height="1.3" fill="#d4d4d4"/><rect x="36" y="218" width="3" height="1.3" fill="#9cdcfe"/><rect x="40" y="218" width="1" height="1.3" fill="#d4d4d4"/><rect x="42" y="218" width="1" height="1.3" fill="#9cdcfe"/><rect x="44" y="218" width="1" height="1.3" fill="#d4d4d4"/><rect x="46" y="218" width="8" height="1.3" fill="#4fc1ff"/><rect x="55" y="218" width="1" height="1.3" fill="#d4d4d4"/><rect x="56" y="218" width="1" height="1.3" fill="#d4d4d4"/><rect x="58" y="218" width="3" height="1.3" fill="#9cdcfe"/><rect x="62" y="218" width="1" height="1.3" fill="#d4d4d4"/><rect x="64" y="218" width="1" height="1.3" fill="#9cdcfe"/><rect x="66" y="218" width="1" height="1.3" fill="#d4d4d4"/><rect x="67" y="218" width="1" height="1.3" fill="#d4d4d4"/><rect x="69" y="218" width="1" height="1.3" fill="#b5cea8"/><rect x="70" y="218" width="1" height="1.3" fill="#e8d274"/><rect x="72" y="218" width="1" height="1.3" fill="#e8d274"/><rect x="20" y="220" width="10" height="1.3" fill="#dcdcaa"/><rect x="30" y="220" width="1" height="1.3" fill="#e8d274"/><rect x="31" y="220" width="3" height="1.3" fill="#9cdcfe"/><rect x="35" y="220" width="1" height="1.3" fill="#d4d4d4"/><rect x="37" y="220" width="1" height="1.3" fill="#9cdcfe"/><rect x="38" y="220" width="1" height="1.3" fill="#d4d4d4"/><rect x="40" y="220" width="3" height="1.3" fill="#9cdcfe"/><rect x="44" y="220" width="1" height="1.3" fill="#d4d4d4"/><rect x="46" y="220" width="1" height="1.3" fill="#9cdcfe"/><rect x="47" y="220" width="1" height="1.3" fill="#e8d274"/><rect x="48" y="220" width="1" height="1.3" fill="#d4d4d4"/><rect x="16" y="222" width="1" height="1.3" fill="#e8d274"/><rect x="12" y="224" width="1" height="1.3" fill="#e8d274"/><rect x="8" y="226" width="1" height="1.3" fill="#e8d274"/><rect x="4" y="228" width="1" height="1.3" fill="#e8d274"/><rect x="4" y="232" width="11" height="1.3" fill="#6a9955"/><rect x="4" y="234" width="8" height="1.3" fill="#dcdcaa"/><rect x="12" y="234" width="1" height="1.3" fill="#e8d274"/><rect x="13" y="234" width="1" height="1.3" fill="#e8d274"/><rect x="14" y="234" width="1" height="1.3" fill="#d4d4d4"/><rect x="0" y="236" width="1" height="1.3" fill="#e8d274"/><rect x="0" y="240" width="11" height="1.3" fill="#6a9955"/><rect x="0" y="242" width="8" height="1.3" fill="#569cd6"/><rect x="9" y="242" width="8" height="1.3" fill="#dcdcaa"/><rect x="17" y="242" width="1" height="1.3" fill="#e8d274"/><rect x="18" y="242" width="3" height="1.3" fill="#9cdcfe"/><rect x="21" y="242" width="1" height="1.3" fill="#d4d4d4"/><rect x="23" y="242" width="3" height="1.3" fill="#9cdcfe"/><rect x="26" y="242" width="1" height="1.3" fill="#e8d274"/><rect x="28" y="242" width="1" height="1.3" fill="#e8d274"/><rect x="4" y="244" width="2" height="1.3" fill="#c586c0"/><rect x="7" y="244" width="1" height="1.3" fill="#e8d274"/><rect x="8" y="244" width="8" height="1.3" fill="#9cdcfe"/><rect x="17" y="244" width="1" height="1.3" fill="#d4d4d4"/><rect x="18" y="244" width="1" height="1.3" fill="#d4d4d4"/><rect x="20" y="244" width="7" height="1.3" fill="#9cdcfe"/><rect x="28" y="244" width="1" height="1.3" fill="#d4d4d4"/><rect x="29" y="244" width="1" height="1.3" fill="#d4d4d4"/><rect x="31" y="244" width="5" height="1.3" fill="#9cdcfe"/><rect x="36" y="244" width="1" height="1.3" fill="#e8d274"/><rect x="37" y="244" width="3" height="1.3" fill="#9cdcfe"/><rect x="40" y="244" width="1" height="1.3" fill="#e8d274"/><rect x="41" y="244" width="1" height="1.3" fill="#e8d274"/><rect x="42" y="244" width="3" height="1.3" fill="#9cdcfe"/><rect x="45" y="244" width="1" height="1.3" fill="#e8d274"/><rect x="46" y="244" width="1" height="1.3" fill="#d4d4d4"/><rect x="47" y="244" width="10" height="1.3" fill="#9cdcfe"/><rect x="57" y="244" width="1" height="1.3" fill="#e8d274"/><rect x="59" y="244" width="1" height="1.3" fill="#e8d274"/><rect x="8" y="246" width="6" height="1.3" fill="#c586c0"/><rect x="14" y="246" width="1" height="1.3" fill="#d4d4d4"/><rect x="4" y="248" width="1" height="1.3" fill="#e8d274"/><rect x="4" y="252" width="5" height="1.3" fill="#569cd6"/><rect x="10" y="252" width="4" height="1.3" fill="#4fc1ff"/><rect x="15" y="252" width="1" height="1.3" fill="#d4d4d4"/><rect x="17" y="252" width="5" height="1.3" fill="#9cdcfe"/><rect x="22" y="252" width="1" height="1.3" fill="#e8d274"/><rect x="23" y="252" width="3" height="1.3" fill="#9cdcfe"/><rect x="26" y="252" width="1" height="1.3" fill="#e8d274"/><rect x="27" y="252" width="1" height="1.3" fill="#e8d274"/><rect x="28" y="252" width="3" height="1.3" fill="#9cdcfe"/><rect x="31" y="252" width="1" height="1.3" fill="#e8d274"/><rect x="32" y="252" width="1" height="1.3" fill="#d4d4d4"/><rect x="4" y="254" width="4" height="1.3" fill="#4fc1ff"/><rect x="8" y="254" width="1" height="1.3" fill="#d4d4d4"/><rect x="9" y="254" width="9" height="1.3" fill="#9cdcfe"/><rect x="19" y="254" width="1" height="1.3" fill="#d4d4d4"/><rect x="21" y="254" width="1" height="1.3" fill="#d4d4d4"/><rect x="22" y="254" width="4" height="1.3" fill="#4fc1ff"/><rect x="26" y="254" width="1" height="1.3" fill="#d4d4d4"/><rect x="27" y="254" width="9" height="1.3" fill="#9cdcfe"/><rect x="36" y="254" width="1" height="1.3" fill="#d4d4d4"/><rect x="4" y="256" width="4" height="1.3" fill="#4fc1ff"/><rect x="8" y="256" width="1" height="1.3" fill="#d4d4d4"/><rect x="9" y="256" width="7" height="1.3" fill="#9cdcfe"/><rect x="16" y="256" width="1" height="1.3" fill="#d4d4d4"/><rect x="17" y="256" width="9" height="1.3" fill="#9cdcfe"/><rect x="26" y="256" width="1" height="1.3" fill="#d4d4d4"/><rect x="27" y="256" width="6" height="1.3" fill="#dcdcaa"/><rect x="33" y="256" width="1" height="1.3" fill="#e8d274"/><rect x="34" y="256" width="9" height="1.3" fill="#ce9178"/><rect x="43" y="256" width="1" height="1.3" fill="#e8d274"/><rect x="44" y="256" width="1" height="1.3" fill="#d4d4d4"/><rect x="0" y="258" width="1" height="1.3" fill="#e8d274"/><rect x="0" y="262" width="15" height="1.3" fill="#6a9955"/><rect x="0" y="264" width="8" height="1.3" fill="#569cd6"/><rect x="9" y="264" width="8" height="1.3" fill="#dcdcaa"/><rect x="17" y="264" width="1" height="1.3" fill="#e8d274"/><rect x="18" y="264" width="1" height="1.3" fill="#e8d274"/><rect x="20" y="264" width="1" height="1.3" fill="#e8d274"/><rect x="4" y="266" width="3" height="1.3" fill="#569cd6"/><rect x="8" y="266" width="8" height="1.3" fill="#9cdcfe"/><rect x="17" y="266" width="1" height="1.3" fill="#d4d4d4"/><rect x="19" y="266" width="1" height="1.3" fill="#b5cea8"/><rect x="20" y="266" width="1" height="1.3" fill="#d4d4d4"/><rect x="4" y="268" width="3" height="1.3" fill="#c586c0"/><rect x="8" y="268" width="1" height="1.3" fill="#e8d274"/><rect x="9" y="268" width="3" height="1.3" fill="#569cd6"/><rect x="13" y="268" width="3" height="1.3" fill="#9cdcfe"/><rect x="17" y="268" width="1" height="1.3" fill="#d4d4d4"/><rect x="19" y="268" width="1" height="1.3" fill="#b5cea8"/><rect x="20" y="268" width="1" height="1.3" fill="#d4d4d4"/><rect x="22" y="268" width="3" height="1.3" fill="#9cdcfe"/><rect x="26" y="268" width="1" height="1.3" fill="#d4d4d4"/><rect x="28" y="268" width="8" height="1.3" fill="#4fc1ff"/><rect x="36" y="268" width="1" height="1.3" fill="#d4d4d4"/><rect x="38" y="268" width="3" height="1.3" fill="#9cdcfe"/><rect x="41" y="268" width="1" height="1.3" fill="#d4d4d4"/><rect x="42" y="268" width="1" height="1.3" fill="#d4d4d4"/><rect x="43" y="268" width="1" height="1.3" fill="#e8d274"/><rect x="45" y="268" width="1" height="1.3" fill="#e8d274"/><rect x="8" y="270" width="3" height="1.3" fill="#c586c0"/><rect x="12" y="270" width="1" height="1.3" fill="#e8d274"/><rect x="13" y="270" width="3" height="1.3" fill="#569cd6"/><rect x="17" y="270" width="3" height="1.3" fill="#9cdcfe"/><rect x="21" y="270" width="1" height="1.3" fill="#d4d4d4"/><rect x="23" y="270" width="1" height="1.3" fill="#b5cea8"/><rect x="24" y="270" width="1" height="1.3" fill="#d4d4d4"/><rect x="26" y="270" width="3" height="1.3" fill="#9cdcfe"/><rect x="30" y="270" width="1" height="1.3" fill="#d4d4d4"/><rect x="32" y="270" width="8" height="1.3" fill="#4fc1ff"/><rect x="40" y="270" width="1" height="1.3" fill="#d4d4d4"/><rect x="42" y="270" width="3" height="1.3" fill="#9cdcfe"/><rect x="45" y="270" width="1" height="1.3" fill="#d4d4d4"/><rect x="46" y="270" width="1" height="1.3" fill="#d4d4d4"/><rect x="47" y="270" width="1" height="1.3" fill="#e8d274"/><rect x="49" y="270" width="1" height="1.3" fill="#e8d274"/><rect x="12" y="272" width="2" height="1.3" fill="#c586c0"/><rect x="15" y="272" width="1" height="1.3" fill="#e8d274"/><rect x="16" y="272" width="5" height="1.3" fill="#9cdcfe"/><rect x="21" y="272" width="1" height="1.3" fill="#e8d274"/><rect x="22" y="272" width="3" height="1.3" fill="#9cdcfe"/><rect x="25" y="272" width="1" height="1.3" fill="#e8d274"/><rect x="26" y="272" width="1" height="1.3" fill="#e8d274"/><rect x="27" y="272" width="3" height="1.3" fill="#9cdcfe"/><rect x="30" y="272" width="1" height="1.3" fill="#e8d274"/><rect x="31" y="272" width="1" height="1.3" fill="#d4d4d4"/><rect x="32" y="272" width="10" height="1.3" fill="#9cdcfe"/><rect x="43" y="272" width="1" height="1.3" fill="#d4d4d4"/><rect x="44" y="272" width="1" height="1.3" fill="#d4d4d4"/><rect x="46" y="272" width="1" height="1.3" fill="#d4d4d4"/><rect x="47" y="272" width="5" height="1.3" fill="#9cdcfe"/><rect x="52" y="272" width="1" height="1.3" fill="#e8d274"/><rect x="53" y="272" width="3" height="1.3" fill="#9cdcfe"/><rect x="56" y="272" width="1" height="1.3" fill="#e8d274"/><rect x="57" y="272" width="1" height="1.3" fill="#e8d274"/><rect x="58" y="272" width="3" height="1.3" fill="#9cdcfe"/><rect x="61" y="272" width="1" height="1.3" fill="#e8d274"/><rect x="62" y="272" width="1" height="1.3" fill="#d4d4d4"/><rect x="63" y="272" width="6" height="1.3" fill="#9cdcfe"/><rect x="69" y="272" width="1" height="1.3" fill="#e8d274"/><rect x="71" y="272" width="1" height="1.3" fill="#e8d274"/><rect x="16" y="274" width="8" height="1.3" fill="#9cdcfe"/><rect x="24" y="274" width="1" height="1.3" fill="#d4d4d4"/><rect x="25" y="274" width="1" height="1.3" fill="#d4d4d4"/><rect x="26" y="274" width="1" height="1.3" fill="#d4d4d4"/><rect x="12" y="276" width="1" height="1.3" fill="#e8d274"/><rect x="8" y="278" width="1" height="1.3" fill="#e8d274"/><rect x="4" y="280" width="1" height="1.3" fill="#e8d274"/><rect x="4" y="284" width="2" height="1.3" fill="#c586c0"/><rect x="7" y="284" width="1" height="1.3" fill="#e8d274"/><rect x="8" y="284" width="8" height="1.3" fill="#9cdcfe"/><rect x="17" y="284" width="1" height="1.3" fill="#d4d4d4"/><rect x="18" y="284" width="1" height="1.3" fill="#d4d4d4"/><rect x="19" y="284" width="1" height="1.3" fill="#d4d4d4"/><rect x="21" y="284" width="8" height="1.3" fill="#4fc1ff"/><rect x="30" y="284" width="1" height="1.3" fill="#d4d4d4"/><rect x="32" y="284" width="8" height="1.3" fill="#4fc1ff"/><rect x="41" y="284" width="1" height="1.3" fill="#d4d4d4"/><rect x="43" y="284" width="9" height="1.3" fill="#4fc1ff"/><rect x="52" y="284" width="1" height="1.3" fill="#e8d274"/><rect x="54" y="284" width="1" height="1.3" fill="#e8d274"/><rect x="8" y="286" width="7" height="1.3" fill="#9cdcfe"/><rect x="16" y="286" width="1" height="1.3" fill="#d4d4d4"/><rect x="18" y="286" width="4" height="1.3" fill="#569cd6"/><rect x="22" y="286" width="1" height="1.3" fill="#d4d4d4"/><rect x="8" y="288" width="5" height="1.3" fill="#dcdcaa"/><rect x="13" y="288" width="1" height="1.3" fill="#e8d274"/><rect x="14" y="288" width="14" height="1.3" fill="#ce9178"/><rect x="28" y="288" width="1" height="1.3" fill="#e8d274"/><rect x="29" y="288" width="1" height="1.3" fill="#d4d4d4"/><rect x="4" y="290" width="1" height="1.3" fill="#e8d274"/><rect x="0" y="292" width="1" height="1.3" fill="#e8d274"/><rect x="0" y="296" width="11" height="1.3" fill="#6a9955"/><rect x="0" y="298" width="8" height="1.3" fill="#dcdcaa"/><rect x="8" y="298" width="1" height="1.3" fill="#e8d274"/><rect x="9" y="298" width="1" height="1.3" fill="#e8d274"/><rect x="10" y="298" width="1" height="1.3" fill="#d4d4d4"/><rect width="68" height="302" fill="url(#dz)"/></svg>
  <div id="pill1" class="abs pill"><svg class="abs" style="left:0;top:0" width="64" height="22" viewBox="0 0 64 22" fill="none" stroke="#fff" stroke-width="1.5"><path d="M4.9 11.3L9.8 15.3 18.7 5.9" stroke-width="1.45"/><path d="M28.6 6.4V11.2H33.4" stroke-width="1.3"/><path d="M29 10.8Q32 6.4 35.4 8Q38.6 10 36.2 13.4L30.6 17.6" stroke-width="1.3"/><path d="M46.7 4.9H54.6L57.3 7.8V17.2H46.7Z" stroke-width="1.3"/><path d="M52 7V12 M49.5 9.5H54.5 M49.5 14.4H54.5" stroke-width="1.3"/></svg></div>
  <div id="pill2" class="abs pill"><span class="lbl " style="left:7.4px;font-size:12px;top:0.5px;position:absolute;">保留</span><span class="lbl " style="left:41.5px;font-size:12px;top:0.5px;position:absolute;">撤消</span><svg class="abs" style="left:76.6px;top:8.5px" width="14" height="14" viewBox="0 0 14 14" fill="none" stroke="#fff" stroke-width="1.3"><path d="M1.2 0.8H9.4L12.6 4V13.2H1.2Z"/><path d="M7 3.2V8 M4.6 5.6H9.4 M4.6 10.4H9.4"/></svg><i class="abs" style="left:100px;top:7px;width:1px;height:16px;background:rgba(255,255,255,.4)"></i><span class="lbl " style="left:111.2px;font-size:12px;top:0.5px;position:absolute;transform:scaleX(0.9804);transform-origin:0 50%;">10/11</span><svg class="abs" style="left:152.5px;top:8.5px" width="14" height="14" viewBox="0 0 14 14" fill="none" stroke="#fff" stroke-width="1.5"><path d="M7 13V1.6 M2 6.6L7 1.6 12 6.6"/></svg><svg class="abs" style="left:177px;top:8.5px" width="14" height="14" viewBox="0 0 14 14" fill="none" stroke="#fff" stroke-width="1.5"><path d="M7 1V12.4 M2 7.4L7 12.4 12 7.4"/></svg></div>
  <div id="panel" class="abs"><span class="pt" style="left:19.7px;color:#9d9d9d">问题</span><span class="abs" style="left:45.7px;top:9.4px;width:21.6px;height:18px;border-radius:9px;background:#f0425f;color:#fff;font-size:11px;font-weight:bold;line-height:18px;text-align:center;letter-spacing:-0.5px">13</span><span class="pt" style="left:89px;color:#9d9d9d">输出</span><span class="pt" style="left:135px;color:#9d9d9d">调试控制台</span><span class="pt" style="left:213.7px;color:#e7e7e7">终端</span><span class="pt" style="left:259.9px;color:#9d9d9d">端口</span><svg class="abs" style="left:735px;top:11px" width="100" height="20" viewBox="0 0 100 20" fill="none" stroke="#c5c5c5" stroke-width="1.3"><rect x="1.6" y="1.6" width="11.6" height="14" rx="1"/><path d="M7.4 1.6V16"/><path d="M20 6.4L23.3 9.7 26.6 6.4" stroke-width="1.1"/><circle cx="41.2" cy="7.8" r="0.95" fill="#c5c5c5" stroke="none"/><circle cx="46" cy="7.8" r="0.95" fill="#c5c5c5" stroke="none"/><circle cx="50.8" cy="7.8" r="0.95" fill="#c5c5c5" stroke="none"/><path d="M65.5 -2V20" stroke="#3a3b3f" stroke-width="1"/><path d="M79.6 5.6V1.8H83.4 M88 1.8H91.8V5.6" stroke-width="1.4"/></svg></div>
</div>
</body>
</html>
